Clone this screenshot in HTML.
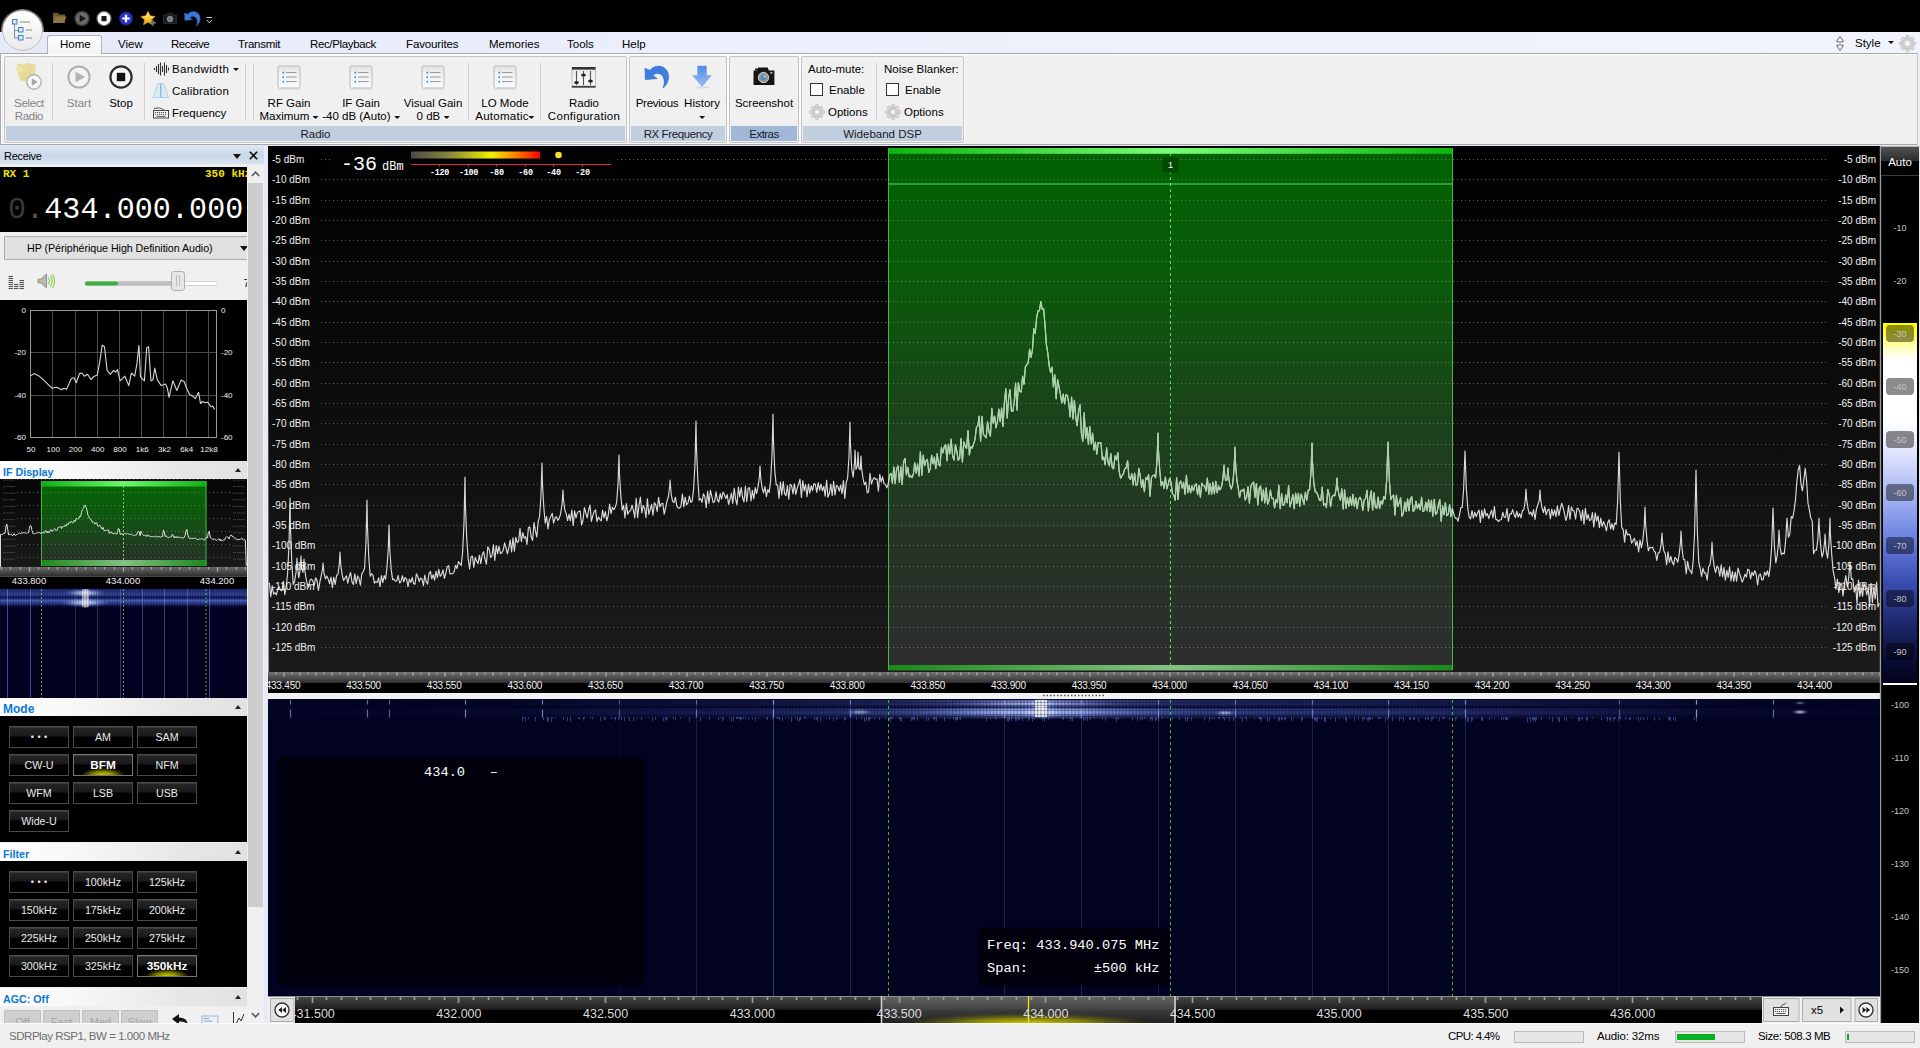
<!DOCTYPE html><html><head><meta charset="utf-8"><title>SDRuno</title><style>*{box-sizing:border-box;margin:0;padding:0}
html,body{width:1920px;height:1048px;overflow:hidden;background:#f0f0f0}
body{position:relative;font-family:"Liberation Sans",sans-serif;font-size:11.5px;color:#000}
.a{position:absolute}
.t{position:absolute;white-space:nowrap;line-height:14px}
.c{text-align:center}
.mono{font-family:"Liberation Mono","DejaVu Sans Mono",monospace}
svg{position:absolute;overflow:visible}
#title{left:0;top:0;width:1920px;height:32px;background:#000}
#tabs{left:0;top:32px;width:1920px;height:22px;background:linear-gradient(90deg,#e6e9f9 0,#eceffb 40%,#f1f4fc 100%)}
#ribbon{left:0;top:53px;width:1918px;height:92px;background:#f0f0f0;border:1px solid #a9a9a9;border-right-color:#c8c8c8;box-shadow:inset 1px 1px 0 #fff}
#under{left:0;top:145px;width:1920px;height:1px;background:#e4e8f6}
.tab{top:37px;font-size:11.5px}
.grp{top:56px;height:87px;border:1px solid #c3c3c3;border-radius:2px;background:#f0f0f0;box-shadow:0 0 0 1px #fafafa}
.grp .lab{left:1px;right:1px;bottom:1px;height:15px;background:#c1cedd;text-align:center;line-height:17px;font-size:11.5px;color:#1a1a2a}
.sep{width:1px;background:#cfcfcf;top:63px;height:57px}
.big{top:97px;text-align:center;line-height:13px;transform:translateX(-50%);white-space:nowrap}
.gray{color:#8b8285}
.sm{line-height:14px}
.hdr{left:0;width:247px;height:18px;background:linear-gradient(90deg,#ffffff,#f6f6f6 35%,#e6e6e6 75%,#e2e2e2);color:#0a78d7;font-weight:bold;font-size:12px;line-height:23px;padding-left:3px;overflow:hidden}
.hdr i{position:absolute;right:6px;top:7px;width:0;height:0;border-left:3.5px solid transparent;border-right:3.5px solid transparent;border-bottom:4px solid #222}
.btn{position:absolute;width:60px;height:22px;border:1px solid #4a4a4a;background:linear-gradient(#262626 0,#1a1a1a 45%,#000 50%,#000 100%);color:#e8e8e8;text-align:center;line-height:20px;font-size:10.7px;box-shadow:inset 0 1px 0 #3a3a3a}
.btn.on{color:#fff;font-weight:bold;font-size:11.8px;border-color:#777;background:radial-gradient(ellipse 22px 7px at 50% 100%,#c8c800 0,#8a8a00 45%,rgba(0,0,0,0) 100%),linear-gradient(#262626 0,#1a1a1a 45%,#000 50%,#000 100%)}
.dots{font-size:9px;letter-spacing:3.5px;line-height:21px;text-indent:3.5px}
.axl{position:absolute;color:#f0f0f0;font-size:11px;line-height:12px;white-space:nowrap}
.dd{display:inline-block;width:0;height:0;border-left:3px solid transparent;border-right:3px solid transparent;border-top:3.5px solid #111;vertical-align:1.5px}
.ddx{width:0;height:0;border-left:3px solid transparent;border-right:3px solid transparent;border-top:3.5px solid #111}
.dl{font-size:10px;letter-spacing:0}.fl{font-size:10px;letter-spacing:-.2px}
</style></head><body>
<div class="a" id="title"></div>
<div class="a" id="tabs"></div>
<div class="a" id="ribbon"></div>
<div class="a" id="under"></div>
<!-- app button -->
<div class="a" style="left:2px;top:10px;width:41px;height:41px;border-radius:50%;background:linear-gradient(#ffffff,#e9e9e9);border:1px solid #bdbdbd;box-shadow:0 0 0 1px rgba(255,255,255,.5)"></div>
<svg style="left:11px;top:18px" width="24" height="24" viewBox="0 0 24 24" fill="none">
<path d="M3.5 6v14h4M3.5 12.5h4" stroke="#7a8a9a" stroke-width="1"/>
<rect x="1.5" y="1.5" width="4.5" height="4.5" fill="#d9ecff" stroke="#3c7fc0"/>
<rect x="7.5" y="9.5" width="4.5" height="4.5" fill="#d9ecff" stroke="#3c7fc0"/>
<rect x="7.5" y="17.5" width="4.5" height="4.5" fill="#d9ecff" stroke="#3c7fc0"/>
<path d="M9 4h10M15 12h6M15 20h6" stroke="#888" stroke-width="1"/>
</svg>
<!-- quick access -->
<svg style="left:52px;top:10px" width="170" height="18" viewBox="52 10 170 18"><defs><linearGradient id="gst" x1="0" y1="0" x2="0" y2="1"><stop offset="0" stop-color="#fff2b8"/><stop offset=".45" stop-color="#fbd14a"/><stop offset="1" stop-color="#ee9a0c"/></linearGradient></defs>
<path d="M53 13h5l1.5 1.5H65V23H53z" fill="#6b5a2e"/><path d="M55 16.5h11.5L64 23H53z" fill="#8a7640"/>
<circle cx="82" cy="18.5" r="7" fill="#6c6c6c" stroke="#3c3c3c" stroke-width="1.6"/><path d="M79.6 14.8l6.4 3.7-6.4 3.7z" fill="#161616"/>
<circle cx="104" cy="18.5" r="7" fill="#fff" stroke="#777" stroke-width="1.2"/><rect x="101.4" y="16" width="5.2" height="5.2" rx=".8" fill="#1a1a1a"/>
<circle cx="126" cy="18.5" r="6.6" fill="#2a33c8" stroke="#1a1f7a" stroke-width="1"/><path d="M126 14.8v7.4M122.3 18.5h7.4" stroke="#fff" stroke-width="2.2"/>
<path d="M148 11.2l2.2 4.6 5 .6-3.7 3.4 1 5-4.5-2.5-4.5 2.5 1-5-3.7-3.4 5-.6z" fill="url(#gst)" stroke="#d89a10" stroke-width=".6"/><path d="M153 19.800v6M150 22.800h6" stroke="#777" stroke-width="1.500"/>
<path d="M163.5 15h3l1-1.800h5l1 1.800h3v8.500h-13z" fill="#1c1c1c" stroke="#3a3a3a" stroke-width=".6"/><circle cx="170" cy="19" r="2.8" fill="#6a7a86" stroke="#999" stroke-width=".8"/>
<g transform="translate(192.500 18) scale(.66) translate(-657 -76)"><path d="M644.900 68.200L645.300 79.800L657.200 78.600L653 75.300C656 72.800 660.500 73 662.600 76.200C664.800 79.600 664.600 84 663 88.200C668.800 83.500 670 76.500 667.300 71.300C664.200 65.500 656 63.800 649.800 70.200Z" fill="#3a78d6" stroke="#2256b0" stroke-width=".7"/></g>
<path d="M206.500 17.500h5.500" stroke="#ccc" stroke-width="1"/><path d="M206.800 20l2.500 2.800 2.500-2.800" stroke="#ccc" stroke-width="1" fill="none"/>
</svg>
<!-- tabs -->
<div class="a" style="left:47px;top:35px;width:55px;height:19px;background:linear-gradient(#fff,#f3f3f3);border:1px solid #aeb2bd;border-bottom:none;border-radius:3px 3px 0 0"></div>
<div class="t tab" style="left:60px">Home</div>
<div class="t tab" style="left:118px">View</div>
<div class="t tab" style="left:171px;letter-spacing:-.5px">Receive</div>
<div class="t tab" style="left:238px;letter-spacing:-.25px">Transmit</div>
<div class="t tab" style="left:310px;letter-spacing:-.36px">Rec/Playback</div>
<div class="t tab" style="left:406px;letter-spacing:-.13px">Favourites</div>
<div class="t tab" style="left:489px">Memories</div>
<div class="t tab" style="left:567px">Tools</div>
<div class="t tab" style="left:622px">Help</div>
<svg style="left:1834px;top:35px" width="12" height="17" viewBox="0 0 12 17" fill="none" stroke="#666" stroke-width="1"><path d="M2.500 6.500L6 1.500l3.500 5q-3.500 1.500-7 0z"/><path d="M2.500 10.500L6 15.500l3.500-5q-3.500-1.500-7 0z"/></svg>
<div class="t tab" style="left:1855px;top:36px">Style</div>
<div class="a" style="left:1888px;top:41px;border-left:3px solid transparent;border-right:3px solid transparent;border-top:3.500px solid #111"></div>
<svg style="left:1899px;top:35px" width="17" height="17" viewBox="-8.500 -8.500 17 17"><g fill="#d9d9d9" stroke="#bdbdbd" stroke-width=".8"><circle r="5.600"/><g id="gt"><rect x="-1.600" y="-8" width="3.200" height="3.400" rx=".6"/><rect x="-1.600" y="4.600" width="3.200" height="3.400" rx=".6"/></g><use href="#gt" transform="rotate(45)"/><use href="#gt" transform="rotate(90)"/><use href="#gt" transform="rotate(135)"/></g><circle r="3.200" fill="#f4f4f4" stroke="#c4c4c4" stroke-width=".8"/></svg>
<!-- groups -->
<div class="a grp" style="left:4px;width:623px"><div class="a lab">Radio</div></div>
<div class="a grp" style="left:629px;width:98px"><div class="a lab" style="letter-spacing:-.4px">RX Frequency</div></div>
<div class="a grp" style="left:729px;width:70px"><div class="a lab" style="background:#a0b8d8;letter-spacing:-.55px">Extras</div></div>
<div class="a grp" style="left:801px;width:163px"><div class="a lab">Wideband DSP</div></div>
<div class="a sep" style="left:52px"></div><div class="a sep" style="left:144px"></div><div class="a sep" style="left:245px"></div><div class="a sep" style="left:253px"></div><div class="a sep" style="left:468px"></div><div class="a sep" style="left:540px"></div><div class="a sep" style="left:876px"></div>
<!-- big buttons text -->
<div class="a big gray" style="left:29px;letter-spacing:-.35px">Select<br>Radio</div>
<div class="a big gray" style="left:79px">Start</div>
<div class="a big" style="left:121px">Stop</div>
<div class="a big" style="left:289px">RF Gain<br>Maximum <span class="dd"></span></div>
<div class="a big" style="left:361px">IF Gain<br>-40 dB (Auto) <span class="dd"></span></div>
<div class="a big" style="left:433px">Visual Gain<br>0 dB <span class="dd"></span></div>
<div class="a big" style="left:505px">LO Mode<br><span style="letter-spacing:.25px">Automatic</span><span class="dd"></span></div>
<div class="a big" style="left:584px">Radio<br><span style="letter-spacing:.3px">Configuration</span></div>
<div class="a big" style="left:657px;letter-spacing:-.25px">Previous</div>
<div class="a big" style="left:702px">History<br><span class="dd"></span></div>
<div class="a big" style="left:764px">Screenshot</div>
<!-- small buttons -->
<div class="t sm" style="left:172px;top:62px;letter-spacing:.4px">Bandwidth</div><div class="a ddx" style="left:233px;top:68px"></div>
<div class="t sm" style="left:172px;top:84px;letter-spacing:.18px">Calibration</div>
<div class="t sm" style="left:172px;top:106px">Frequency</div>
<div class="t sm" style="left:808px;top:62px">Auto-mute:</div>
<div class="t sm" style="left:829px;top:83px">Enable</div>
<div class="t sm" style="left:828px;top:105px">Options</div>
<div class="t sm" style="left:884px;top:62px">Noise Blanker:</div>
<div class="t sm" style="left:905px;top:83px">Enable</div>
<div class="t sm" style="left:904px;top:105px">Options</div>
<div class="a" style="left:810px;top:83px;width:13px;height:13px;background:#fff;border:1px solid #333"></div>
<div class="a" style="left:886px;top:83px;width:13px;height:13px;background:#fff;border:1px solid #333"></div>
<!-- ribbon icons -->
<svg style="left:0;top:0" width="980" height="145" viewBox="0 0 980 145">
<defs>
<linearGradient id="gl" x1="0" y1="0" x2="0" y2="1"><stop offset="0" stop-color="#e2e2e2"/><stop offset=".35" stop-color="#f1f1f1"/><stop offset="1" stop-color="#fafafa"/></linearGradient>
<linearGradient id="gb" x1="0" y1="0" x2="0" y2="1"><stop offset="0" stop-color="#4d8be8"/><stop offset="1" stop-color="#9bbcf0"/></linearGradient>
<linearGradient id="gf" x1="0" y1="0" x2="1" y2="1"><stop offset="0" stop-color="#f2e8b0"/><stop offset="1" stop-color="#dccb78"/></linearGradient>
<g id="lst"><rect x=".5" y=".5" width="22" height="22" rx="1.5" fill="url(#gl)" stroke="#b9b9b9"/><path d="M8.500 7h10.500M8.500 11.500h10.500M8.500 16h10.500" stroke="#9a9a9a" stroke-width="1"/><path d="M5 6.300h1.600v1.600H5zM5 10.800h1.600v1.600H5zM5 15.300h1.600v1.600H5z" fill="#2f8be6"/><path d="M1 23.500h21" stroke="#d0d0d0"/></g>
<g id="gear"><g fill="#dcdcdc" stroke="#b8b8b8" stroke-width=".8"><circle r="5"/><g id="g2"><rect x="-1.500" y="-7.300" width="3" height="3.200" rx=".6"/><rect x="-1.500" y="4.100" width="3" height="3.200" rx=".6"/></g><use href="#g2" transform="rotate(45)"/><use href="#g2" transform="rotate(90)"/><use href="#g2" transform="rotate(135)"/></g><circle r="2.800" fill="#f0f0f0" stroke="#c0c0c0" stroke-width=".8"/></g>
</defs>
<!-- select radio -->
<path d="M16.500 63.500l8.500 1 1.500-1.500 9 1.200v14l-14 .5z" fill="#e9dc98"/>
<path d="M15.500 67l16 1.200 4.500 13.500-15.500-1z" fill="url(#gf)" stroke="#e8dfae" stroke-width=".5"/>
<circle cx="34" cy="82" r="7.200" fill="#f8f8f8" stroke="#b4b4b4" stroke-width="1.400"/><path d="M31.800 78.300l6 3.700-6 3.700z" fill="#a8a8a8"/>
<!-- start -->
<circle cx="79" cy="77" r="10.600" fill="#f4f4f4" stroke="#b0b0b0" stroke-width="2"/><path d="M75.500 71.500l9.500 5.500-9.500 5.500z" fill="#b4b4b4"/>
<!-- stop -->
<circle cx="121" cy="77" r="10.600" fill="#f6f6f6" stroke="#2c2c2c" stroke-width="2.200"/><rect x="116.800" y="72.800" width="8.400" height="8.400" fill="#111"/>
<!-- bandwidth -->
<path d="M154.500 68v2M156.500 66v6M158.500 64v10M160.500 62.500v13M162.500 66v6M164.500 62.500v13M166.500 65v8M168.500 67.500v3" stroke="#333" stroke-width="1.100"/>
<!-- calibration -->
<path d="M158 83.500h5.500l5 14h-15.500z" fill="#d8ecf8" stroke="#a9c6da" stroke-width=".8"/><path d="M160.800 83.500v14" stroke="#8eb0c8" stroke-width="1.200"/>
<!-- frequency keyboard -->
<path d="M154 108.500q6-1.500 9 .8l2 1.700" stroke="#555" fill="none" stroke-width="1"/>
<rect x="153.500" y="110.500" width="15" height="7.500" fill="#f4f4f4" stroke="#444" stroke-width="1"/><path d="M155 112.500h12M155 114.300h12" stroke="#555" stroke-width="1" stroke-dasharray="1.200 .8"/><path d="M156.500 116.300h9" stroke="#555" stroke-width="1"/>
<!-- list icons -->
<use href="#lst" x="277.500" y="65.500"/><use href="#lst" x="349.500" y="65.500"/><use href="#lst" x="421.500" y="65.500"/><use href="#lst" x="493.500" y="65.500"/>
<!-- mixer -->
<rect x="572" y="67.500" width="23.500" height="20" fill="url(#gl)" stroke="#9a9a9a" stroke-width=".6"/>
<rect x="572" y="67" width="23.500" height="2.600" fill="#333"/><rect x="572" y="85.800" width="23.500" height="1.800" fill="#444"/>
<path d="M576.500 71v14M583.500 71v14M590.500 71v14" stroke="#555" stroke-width="1.100"/>
<ellipse cx="576.500" cy="82.500" rx="2.400" ry="1.500" fill="#222"/><ellipse cx="583.500" cy="75" rx="2.400" ry="1.500" fill="#222"/><ellipse cx="590.500" cy="81" rx="2.400" ry="1.500" fill="#222"/>
<!-- previous -->
<path id="prv" d="M644.900 68.200L645.300 79.800L657.200 78.600L653 75.300C656 72.800 660.500 73 662.600 76.200C664.800 79.600 664.600 84 663 88.200C668.800 83.500 670 76.500 667.300 71.300C664.200 65.500 656 63.800 649.800 70.200Z" fill="#3f7de0" stroke="#2e62c4" stroke-width=".5"/>
<!-- history -->
<path d="M697.500 66h9v9.500h4.800L702 86.500 692.700 75.500h4.800z" fill="url(#gb)" stroke="#7da3e0" stroke-width=".5"/>
<ellipse cx="702" cy="87.500" rx="8" ry="1.200" fill="#d4d4d4" opacity=".7"/>
<!-- camera -->
<path d="M753.500 70.500h3.500l1.200-3h9.500l1.200 3h5.500v14.500h-20.900z" fill="#151515"/><rect x="755" y="68.500" width="3" height="2" fill="#222"/>
<circle cx="763.500" cy="77.500" r="5.200" fill="#8b97a1" stroke="#cfcfcf" stroke-width="1"/><circle cx="763.500" cy="77.500" r="2.600" fill="#5e86ad"/><circle cx="764.600" cy="76.400" r="1" fill="#cfe3f5"/><rect x="770.500" y="72" width="1.800" height="1.600" fill="#ddd"/>
<!-- gears -->
<use href="#gear" x="817" y="112"/><use href="#gear" x="893" y="112"/>
</svg>



<div class="a" style="left:0;top:146px;width:264px;height:878px;background:#f0f0f0"></div>
<div class="a" style="left:264px;top:146px;width:4px;height:878px;background:#e6e9f8"></div>
<div class="a" style="left:0;top:146px;width:264px;height:19px;background:linear-gradient(#dde7f2,#c9d7e8 55%,#d9e4f1);border-bottom:1px solid #e8eef6"></div>
<div class="t" style="left:4px;top:149px;font-size:11px;letter-spacing:-.3px">Receive</div>
<div class="a" style="left:233px;top:154px;border-left:4.5px solid transparent;border-right:4.5px solid transparent;border-top:5px solid #111"></div>
<svg style="left:249px;top:151px" width="9" height="9" viewBox="0 0 9 9"><path d="M.8.800l7.400 7.400M8.200.800L.800 8.200" stroke="#111" stroke-width="1.600"/></svg>
<div class="a" style="left:0;top:167px;width:247px;height:65px;background:#000;overflow:hidden"><div class="t mono" style="left:3px;top:1px;color:#f0e000;font-weight:bold;font-size:11px;line-height:13px">RX 1</div><div class="t mono" style="left:205px;top:1px;color:#f0e000;font-weight:bold;font-size:11px;line-height:13px">350 kHz</div><div class="t mono" style="left:8px;top:24.500px;font-size:30px;line-height:36px;color:#fff;letter-spacing:.1px"><span style="color:#3a3a3a">0</span><span style="color:#555">.</span>434.000.000</div></div>
<div class="a" style="left:4px;top:236px;width:250px;height:24px;background:#e1e1e1;border:1px solid #adadad"></div>
<div class="t" style="left:27px;top:241px;font-size:10.700px;letter-spacing:-.05px">HP (Périphérique High Definition Audio)</div>
<div class="a" style="left:240px;top:246px;border-left:4.5px solid transparent;border-right:4.5px solid transparent;border-top:5px solid #111"></div>
<svg style="left:0;top:262px" width="247" height="38" viewBox="0 262 247 38"><g stroke="#555" stroke-width="1.100" stroke-dasharray="none"><path d="M8.500 288.5h4.500"/><path d="M8.500 286.5h4.500"/><path d="M8.500 284.5h4.500"/><path d="M8.500 282.5h4.500"/><path d="M8.500 280.5h4.500"/><path d="M8.500 278.5h4.500"/><path d="M8.500 276.5h4.500"/><path d="M14 288.5h4.500"/><path d="M14 286.5h4.500"/><path d="M14 284.5h4.500"/><path d="M19.500 288.5h4.500"/><path d="M19.500 286.5h4.500"/><path d="M19.500 284.5h4.500"/><path d="M19.500 282.5h4.500"/><path d="M19.500 280.5h4.500"/></g><path d="M38 279h3l5.500-5v14l-5.500-5h-3z" fill="#b8b8b8" stroke="#777" stroke-width=".7"/><path d="M38 279h1.500v4H38z" fill="#e0a020"/><path d="M48.500 277.500q2 3.500 0 7M50.500 275.500q3.200 5.500 0 11M52.500 274q4 7 0 14" stroke="#7acb2a" stroke-width="1" fill="none"/><rect x="85" y="281.500" width="133" height="4" rx="2" fill="#fff" stroke="#c8c8c8" stroke-width=".8"/><rect x="85" y="281.500" width="90" height="4" rx="2" fill="#bdbdbd"/><rect x="85" y="281.500" width="33" height="4" rx="2" fill="#3cb043"/><rect x="171.500" y="271.500" width="13" height="19" rx="2.500" fill="#e6e6e6" stroke="#b0b0b0"/><path d="M176.500 275v11M179.500 275v11" stroke="#bcbcbc" stroke-width="1"/></svg>
<div class="t" style="left:243.500px;top:276px;font-size:11px">7</div>
<div class="a" style="left:0;top:300px;width:247px;height:161px;background:#000"></div>
<svg style="left:0;top:300px" width="247" height="161" viewBox="0 300 247 161"><g stroke="#4a4a4a" stroke-width="1"><path d="M30.5 310v127"/><path d="M52.5 310v127"/><path d="M75.5 310v127"/><path d="M97.5 310v127"/><path d="M119.5 310v127"/><path d="M141.5 310v127"/><path d="M163.5 310v127"/><path d="M186.5 310v127"/><path d="M208.5 310v127"/><path d="M30 310.5h186"/><path d="M30 352.5h186"/><path d="M30 395.5h186"/><path d="M30 437.5h186"/><path d="M216.500 310v127"/></g><rect x="30.500" y="310.500" width="186" height="127" fill="none" stroke="#9a9a9a"/><polyline points="30.8,375.9 34.1,373.6 38.9,375.9 43.8,380.1 51.9,388.2 56.8,387.2 61.6,389.8 63.9,388.2 66.5,389.2 71.4,378.5 74.0,377.8 76.2,382.7 79.5,373.6 81.8,373.0 84.4,376.2 87.6,374.3 90.9,379.5 94.1,376.2 97.3,375.2 99.9,360.6 102.2,345.1 104.5,346.7 107.1,370.4 110.3,374.3 113.6,370.4 115.8,372.0 117.5,369.7 120.1,380.8 124.9,376.2 128.8,385.6 131.4,373.0 134.7,376.2 136.9,363.9 138.9,345.4 140.5,376.9 144.4,380.8 146.7,347.7 148.6,346.7 150.9,380.8 152.8,380.1 154.8,368.1 157.4,380.1 161.3,385.6 165.5,384.0 167.4,388.2 169.0,397.3 172.9,380.8 176.8,390.5 181.1,380.1 184.3,381.7 186.6,388.2 189.8,394.7 193.1,396.3 195.3,398.6 198.6,392.4 200.5,403.5 202.5,401.5 205.1,402.8 207.7,402.2 210.9,406.7 212.8,406.1 214.5,409.6" fill="none" stroke="#d8d8d8" stroke-width="1.100" stroke-linejoin="round"/></svg>
<div class="axl" style="left:0;width:26px;text-align:right;top:305px;font-size:8px">0</div>
<div class="axl" style="left:221px;top:305px;font-size:8px">0</div>
<div class="axl" style="left:0;width:26px;text-align:right;top:347px;font-size:8px">-20</div>
<div class="axl" style="left:221px;top:347px;font-size:8px">-20</div>
<div class="axl" style="left:0;width:26px;text-align:right;top:390px;font-size:8px">-40</div>
<div class="axl" style="left:221px;top:390px;font-size:8px">-40</div>
<div class="axl" style="left:0;width:26px;text-align:right;top:432px;font-size:8px">-60</div>
<div class="axl" style="left:221px;top:432px;font-size:8px">-60</div>
<div class="axl c" style="left:16.0px;width:30px;top:444px;font-size:8px">50</div>
<div class="axl c" style="left:38.2px;width:30px;top:444px;font-size:8px">100</div>
<div class="axl c" style="left:60.5px;width:30px;top:444px;font-size:8px">200</div>
<div class="axl c" style="left:82.8px;width:30px;top:444px;font-size:8px">400</div>
<div class="axl c" style="left:105.0px;width:30px;top:444px;font-size:8px">800</div>
<div class="axl c" style="left:127.2px;width:30px;top:444px;font-size:8px">1k6</div>
<div class="axl c" style="left:149.5px;width:30px;top:444px;font-size:8px">3k2</div>
<div class="axl c" style="left:171.8px;width:30px;top:444px;font-size:8px">6k4</div>
<div class="axl c" style="left:194.0px;width:30px;top:444px;font-size:8px">12k8</div>
<div class="a hdr" style="top:461px;font-size:10.700px">IF Display<i></i></div>
<div class="a" style="left:0;top:479px;width:247px;height:88px;background:linear-gradient(#050505,#1a1a1a)"></div>
<svg style="left:0;top:479px" width="247" height="219" viewBox="0 479 247 219"><defs><linearGradient id="ifg" x1="0" y1="0" x2="0" y2="1"><stop offset="0" stop-color="#066806"/><stop offset=".35" stop-color="#0d5a0d"/><stop offset="1" stop-color="#2b2b2b"/></linearGradient><linearGradient id="ift" x1="0" y1="0" x2="1" y2="0"><stop offset="0" stop-color="#10b010"/><stop offset=".5" stop-color="#6cf86c"/><stop offset="1" stop-color="#10b010"/></linearGradient><linearGradient id="ifb" x1="0" y1="0" x2="1" y2="0"><stop offset="0" stop-color="#1a8a1a"/><stop offset=".5" stop-color="#84c084"/><stop offset="1" stop-color="#1a8a1a"/></linearGradient><linearGradient id="axg" x1="0" y1="0" x2="0" y2="1"><stop offset="0" stop-color="#6a6a6a"/><stop offset="1" stop-color="#2a2a2a"/></linearGradient></defs><path d="M17 479.5h214" stroke="#5a5a5a" stroke-width="1" stroke-dasharray="1 3"/><path d="M17 492.5h214" stroke="#5a5a5a" stroke-width="1" stroke-dasharray="1 3"/><path d="M17 505.5h214" stroke="#5a5a5a" stroke-width="1" stroke-dasharray="1 3"/><path d="M17 518.5h214" stroke="#5a5a5a" stroke-width="1" stroke-dasharray="1 3"/><path d="M17 531.5h214" stroke="#5a5a5a" stroke-width="1" stroke-dasharray="1 3"/><path d="M17 544.5h214" stroke="#5a5a5a" stroke-width="1" stroke-dasharray="1 3"/><path d="M17 557.5h214" stroke="#5a5a5a" stroke-width="1" stroke-dasharray="1 3"/><path d="M3 480.0h3M7 480.0h8M233 480.0h3M237 480.0h8" stroke="#666" stroke-width="1" stroke-dasharray="1.500 .7" opacity=".7"/><path d="M3 486.6h3M7 486.6h8M233 486.6h3M237 486.6h8" stroke="#666" stroke-width="1" stroke-dasharray="1.500 .7" opacity=".7"/><path d="M3 493.2h3M7 493.2h8M233 493.2h3M237 493.2h8" stroke="#666" stroke-width="1" stroke-dasharray="1.500 .7" opacity=".7"/><path d="M3 499.8h3M7 499.8h8M233 499.8h3M237 499.8h8" stroke="#666" stroke-width="1" stroke-dasharray="1.500 .7" opacity=".7"/><path d="M3 506.4h3M7 506.4h8M233 506.4h3M237 506.4h8" stroke="#666" stroke-width="1" stroke-dasharray="1.500 .7" opacity=".7"/><path d="M3 513.0h3M7 513.0h8M233 513.0h3M237 513.0h8" stroke="#666" stroke-width="1" stroke-dasharray="1.500 .7" opacity=".7"/><path d="M3 519.6h3M7 519.6h8M233 519.6h3M237 519.6h8" stroke="#666" stroke-width="1" stroke-dasharray="1.500 .7" opacity=".7"/><path d="M3 526.2h3M7 526.2h8M233 526.2h3M237 526.2h8" stroke="#666" stroke-width="1" stroke-dasharray="1.500 .7" opacity=".7"/><path d="M3 532.8h3M7 532.8h8M233 532.8h3M237 532.8h8" stroke="#666" stroke-width="1" stroke-dasharray="1.500 .7" opacity=".7"/><path d="M3 539.4h3M7 539.4h8M233 539.4h3M237 539.4h8" stroke="#666" stroke-width="1" stroke-dasharray="1.500 .7" opacity=".7"/><path d="M3 546.0h3M7 546.0h8M233 546.0h3M237 546.0h8" stroke="#666" stroke-width="1" stroke-dasharray="1.500 .7" opacity=".7"/><path d="M3 552.6h3M7 552.6h8M233 552.6h3M237 552.6h8" stroke="#666" stroke-width="1" stroke-dasharray="1.500 .7" opacity=".7"/><path d="M3 559.2h3M7 559.2h8M233 559.2h3M237 559.2h8" stroke="#666" stroke-width="1" stroke-dasharray="1.500 .7" opacity=".7"/><rect x="41" y="481" width="165.500" height="85" fill="url(#ifg)"/><path d="M43 492.5h162" stroke="#5f8a5f" stroke-width="1" stroke-dasharray="1 3" opacity=".7"/><path d="M43 505.5h162" stroke="#5f8a5f" stroke-width="1" stroke-dasharray="1 3" opacity=".7"/><path d="M43 518.5h162" stroke="#5f8a5f" stroke-width="1" stroke-dasharray="1 3" opacity=".7"/><path d="M43 531.5h162" stroke="#5f8a5f" stroke-width="1" stroke-dasharray="1 3" opacity=".7"/><path d="M43 544.5h162" stroke="#5f8a5f" stroke-width="1" stroke-dasharray="1 3" opacity=".7"/><path d="M43 557.5h162" stroke="#5f8a5f" stroke-width="1" stroke-dasharray="1 3" opacity=".7"/><rect x="41" y="481" width="165.500" height="5.500" fill="url(#ift)"/><rect x="41" y="560" width="165.500" height="6" fill="url(#ifb)"/><path d="M41.500 481v85M206 481v85" stroke="#3fb53f" stroke-width="1"/><path d="M123.500 486v74" stroke="#5fdf5f" stroke-width="1" stroke-dasharray="2 2"/><polyline points="0.5,567.0 0.5,534.2 1.4,534.3 2.3,534.8 3.2,533.7 4.1,533.5 5.0,533.2 5.9,527.1 6.8,524.1 7.7,529.3 8.6,535.1 9.5,534.0 10.4,534.6 11.3,534.3 12.2,535.6 13.1,535.2 14.0,533.7 14.9,535.4 15.8,535.3 16.7,534.6 17.6,534.4 18.5,533.4 19.4,533.0 20.3,533.9 21.2,532.9 22.1,533.0 23.0,533.0 23.9,532.4 24.8,533.1 25.7,532.9 26.6,533.5 27.5,532.7 28.4,532.8 29.3,528.6 30.2,525.5 31.1,526.1 32.0,530.6 32.9,533.6 33.8,533.8 34.7,533.6 35.6,533.5 36.5,532.9 37.4,532.9 38.3,532.8 39.2,532.2 40.1,533.4 41.0,532.5 41.9,533.3 42.8,532.2 43.7,533.2 44.6,532.9 45.5,530.4 46.4,530.9 47.3,533.0 48.2,531.4 49.1,532.9 50.0,530.8 50.9,529.5 51.8,531.1 52.7,531.3 53.6,529.5 54.5,528.7 55.4,529.2 56.3,530.9 57.2,529.9 58.1,527.5 59.0,527.6 59.9,526.8 60.8,526.4 61.7,528.5 62.6,526.2 63.5,527.1 64.4,526.2 65.3,524.9 66.2,526.2 67.1,523.8 68.0,524.8 68.9,522.5 69.8,522.9 70.7,521.6 71.6,521.4 72.5,523.2 73.4,522.3 74.3,520.2 75.2,521.5 76.1,518.6 77.0,518.5 77.9,519.4 78.8,518.2 79.7,515.9 80.6,516.9 81.5,512.2 82.4,509.7 83.3,508.5 84.2,505.7 85.1,505.0 86.0,507.0 86.9,509.8 87.8,514.8 88.7,516.2 89.6,518.6 90.5,519.0 91.4,520.1 92.3,522.4 93.2,521.6 94.1,522.6 95.0,524.2 95.9,522.6 96.8,523.1 97.7,526.1 98.6,526.4 99.5,525.2 100.4,525.6 101.3,528.0 102.2,529.2 103.1,527.4 104.0,530.4 104.9,530.8 105.8,530.5 106.7,530.4 107.6,529.8 108.5,530.1 109.4,533.5 110.3,531.8 111.2,533.0 112.1,532.4 113.0,533.9 113.9,533.6 114.8,533.1 115.7,533.0 116.6,534.3 117.5,532.4 118.4,528.3 119.3,529.2 120.2,534.4 121.1,534.1 122.0,533.5 122.9,534.9 123.8,533.6 124.7,533.3 125.6,533.8 126.5,534.2 127.4,533.5 128.3,533.8 129.2,534.2 130.1,534.7 131.0,533.8 131.9,534.4 132.8,535.5 133.7,535.7 134.6,535.1 135.5,535.3 136.4,535.1 137.3,532.9 138.2,531.3 139.1,531.7 140.0,535.8 140.9,531.2 141.8,533.2 142.7,534.2 143.6,535.5 144.5,535.3 145.4,535.9 146.3,535.1 147.2,536.6 148.1,534.8 149.0,535.8 149.9,536.3 150.8,536.7 151.7,536.4 152.6,536.5 153.5,536.7 154.4,537.0 155.3,535.9 156.2,536.6 157.1,537.1 158.0,537.0 158.9,536.2 159.8,536.9 160.7,537.1 161.6,536.5 162.5,536.7 163.4,529.9 164.3,531.5 165.2,536.7 166.1,535.7 167.0,536.9 167.9,537.6 168.8,537.5 169.7,537.3 170.6,536.7 171.5,536.7 172.4,534.2 173.3,536.0 174.2,537.9 175.1,536.4 176.0,537.8 176.9,536.4 177.8,537.6 178.7,537.4 179.6,536.9 180.5,537.9 181.4,537.5 182.3,537.8 183.2,538.4 184.1,537.1 185.0,535.9 185.9,531.2 186.8,529.2 187.7,534.4 188.6,537.1 189.5,538.7 190.4,538.3 191.3,538.0 192.2,539.0 193.1,538.0 194.0,538.8 194.9,537.9 195.8,538.5 196.7,539.3 197.6,539.6 198.5,539.7 199.4,538.7 200.3,539.2 201.2,538.8 202.1,538.5 203.0,539.3 203.9,540.0 204.8,539.9 205.7,537.7 206.6,537.1 207.5,538.1 208.4,531.9 209.3,531.3 210.2,537.0 211.1,538.4 212.0,538.9 212.9,539.4 213.8,539.2 214.7,538.9 215.6,540.1 216.5,540.5 217.4,539.6 218.3,539.0 219.2,539.0 220.1,540.9 221.0,539.3 221.9,540.8 222.8,540.7 223.7,539.9 224.6,540.0 225.5,537.5 226.4,536.8 227.3,537.1 228.2,537.3 229.1,539.1 230.0,536.4 230.9,535.0 231.8,535.3 232.7,536.9 233.6,537.0 234.5,537.8 235.4,538.3 236.3,539.0 237.2,539.8 238.1,539.6 239.0,539.1 239.9,539.7 240.8,538.7 241.7,538.0 242.6,539.2 243.5,540.1 244.4,539.4 245.3,540.0 246.3,566.0" fill="none" stroke="#dcdcdc" stroke-width="1" stroke-linejoin="round"/><rect x="0" y="567" width="247" height="9.500" fill="url(#axg)"/><rect x="0" y="576.500" width="247" height="11.500" fill="#000"/><path d="M1.5 567v2.5" stroke="#a8a8a8" stroke-width="1.300"/><path d="M10.5 567v2.5" stroke="#a8a8a8" stroke-width="1.300"/><path d="M20.5 567v2.5" stroke="#a8a8a8" stroke-width="1.300"/><path d="M29.5 567v4.5" stroke="#a8a8a8" stroke-width="1.300"/><path d="M38.5 567v2.5" stroke="#a8a8a8" stroke-width="1.300"/><path d="M48.5 567v2.5" stroke="#a8a8a8" stroke-width="1.300"/><path d="M57.5 567v2.5" stroke="#a8a8a8" stroke-width="1.300"/><path d="M67.5 567v2.5" stroke="#a8a8a8" stroke-width="1.300"/><path d="M76.5 567v3.5" stroke="#a8a8a8" stroke-width="1.300"/><path d="M85.5 567v2.5" stroke="#a8a8a8" stroke-width="1.300"/><path d="M95.5 567v2.5" stroke="#a8a8a8" stroke-width="1.300"/><path d="M104.5 567v2.5" stroke="#a8a8a8" stroke-width="1.300"/><path d="M114.5 567v2.5" stroke="#a8a8a8" stroke-width="1.300"/><path d="M123.5 567v4.5" stroke="#a8a8a8" stroke-width="1.300"/><path d="M132.5 567v2.5" stroke="#a8a8a8" stroke-width="1.300"/><path d="M142.5 567v2.5" stroke="#a8a8a8" stroke-width="1.300"/><path d="M151.5 567v2.5" stroke="#a8a8a8" stroke-width="1.300"/><path d="M161.5 567v2.5" stroke="#a8a8a8" stroke-width="1.300"/><path d="M170.5 567v3.5" stroke="#a8a8a8" stroke-width="1.300"/><path d="M179.5 567v2.5" stroke="#a8a8a8" stroke-width="1.300"/><path d="M189.5 567v2.5" stroke="#a8a8a8" stroke-width="1.300"/><path d="M198.5 567v2.5" stroke="#a8a8a8" stroke-width="1.300"/><path d="M208.5 567v2.5" stroke="#a8a8a8" stroke-width="1.300"/><path d="M217.5 567v4.5" stroke="#a8a8a8" stroke-width="1.300"/><path d="M226.5 567v2.5" stroke="#a8a8a8" stroke-width="1.300"/><path d="M236.5 567v2.5" stroke="#a8a8a8" stroke-width="1.300"/><path d="M245.5 567v2.5" stroke="#a8a8a8" stroke-width="1.300"/><rect x="0" y="588" width="247" height="110" fill="#020220"/><defs><linearGradient id="wfb" x1="0" y1="0" x2="0" y2="1"><stop offset="0" stop-color="#2a3a8a" stop-opacity=".7"/><stop offset=".3" stop-color="#3a4ea8" stop-opacity=".9"/><stop offset=".45" stop-color="#1c2870" stop-opacity=".6"/><stop offset=".6" stop-color="#5068c8" stop-opacity=".95"/><stop offset=".8" stop-color="#3044a0" stop-opacity=".7"/><stop offset="1" stop-color="#020220" stop-opacity="0"/></linearGradient><pattern id="rip2" width="2.600" height="19" patternUnits="userSpaceOnUse"><rect x="0" y="0" width="1" height="19" fill="#020220" opacity=".3"/></pattern><radialGradient id="wfh"><stop offset="0" stop-color="#fff"/><stop offset=".35" stop-color="#c8d8ff" stop-opacity=".9"/><stop offset="1" stop-color="#5068c8" stop-opacity="0"/></radialGradient></defs><rect x="0" y="589" width="247" height="19" fill="url(#wfb)"/><ellipse cx="85" cy="593" rx="22" ry="4.500" fill="url(#wfh)" opacity=".8"/><ellipse cx="85" cy="602.500" rx="26" ry="5" fill="url(#wfh)" opacity=".85"/><rect x="82" y="589" width="7" height="18.500" rx="2" fill="#fff" opacity=".6"/><rect x="0" y="589" width="247" height="19" fill="url(#rip2)"/><path d="M7.5 589v109" stroke="#6f86e8" stroke-width="1" opacity="0.55"/><path d="M30.5 589v109" stroke="#6f86e8" stroke-width="1" opacity="0.50"/><path d="M75.5 589v109" stroke="#6f86e8" stroke-width="1" opacity="0.30"/><path d="M97.5 589v109" stroke="#6f86e8" stroke-width="1" opacity="0.35"/><path d="M120.5 589v109" stroke="#6f86e8" stroke-width="1" opacity="0.40"/><path d="M142.5 589v109" stroke="#6f86e8" stroke-width="1" opacity="0.45"/><path d="M164.5 589v109" stroke="#6f86e8" stroke-width="1" opacity="0.45"/><path d="M187.5 589v109" stroke="#6f86e8" stroke-width="1" opacity="0.40"/><path d="M209.5 589v109" stroke="#6f86e8" stroke-width="1" opacity="0.50"/><path d="M41.5 589v109" stroke="#4fcf4f" stroke-width="1" stroke-dasharray="2 2" opacity=".85"/><path d="M123.5 589v109" stroke="#4fcf4f" stroke-width="1" stroke-dasharray="2 2" opacity=".85"/><path d="M206.0 589v109" stroke="#4fcf4f" stroke-width="1" stroke-dasharray="2 2" opacity=".85"/></svg>
<div class="axl c" style="left:4px;width:50px;top:574.500px;font-size:9.500px">433.800</div>
<div class="axl c" style="left:98px;width:50px;top:574.500px;font-size:9.500px">434.000</div>
<div class="axl c" style="left:192px;width:50px;top:574.500px;font-size:9.500px">434.200</div>
<div class="a hdr" style="top:698px">Mode<i></i></div>
<div class="a" style="left:0;top:716px;width:247px;height:126px;background:#000"></div>
<div class="btn dots" style="left:9px;top:726px">•••</div>
<div class="btn" style="left:73px;top:726px">AM</div>
<div class="btn" style="left:137px;top:726px">SAM</div>
<div class="btn" style="left:9px;top:754px">CW-U</div>
<div class="btn on" style="left:73px;top:754px">BFM</div>
<div class="btn" style="left:137px;top:754px">NFM</div>
<div class="btn" style="left:9px;top:782px">WFM</div>
<div class="btn" style="left:73px;top:782px">LSB</div>
<div class="btn" style="left:137px;top:782px">USB</div>
<div class="btn" style="left:9px;top:810px">Wide-U</div>
<div class="a hdr" style="top:843px;font-size:10.700px">Filter<i></i></div>
<div class="a" style="left:0;top:861px;width:247px;height:126px;background:#000"></div>
<div class="btn dots" style="left:9px;top:871px">•••</div>
<div class="btn" style="left:73px;top:871px">100kHz</div>
<div class="btn" style="left:137px;top:871px">125kHz</div>
<div class="btn" style="left:9px;top:899px">150kHz</div>
<div class="btn" style="left:73px;top:899px">175kHz</div>
<div class="btn" style="left:137px;top:899px">200kHz</div>
<div class="btn" style="left:9px;top:927px">225kHz</div>
<div class="btn" style="left:73px;top:927px">250kHz</div>
<div class="btn" style="left:137px;top:927px">275kHz</div>
<div class="btn" style="left:9px;top:955px">300kHz</div>
<div class="btn" style="left:73px;top:955px">325kHz</div>
<div class="btn on" style="left:137px;top:955px">350kHz</div>
<div class="a hdr" style="top:988px;font-size:10.700px">AGC: Off<i></i></div>
<div class="a" style="left:0;top:1006px;width:247px;height:18.500px;background:#f0f0f0;overflow:hidden"><div class="a" style="left:4px;top:4px;width:37px;height:22px;background:#cfcfcf;border:1px solid #c0c0c0;color:#a4a4a4;text-align:center;font-size:11px;line-height:22px">Off</div><div class="a" style="left:43px;top:4px;width:37px;height:22px;background:#cfcfcf;border:1px solid #c0c0c0;color:#a4a4a4;text-align:center;font-size:11px;line-height:22px">Fast</div><div class="a" style="left:82px;top:4px;width:37px;height:22px;background:#cfcfcf;border:1px solid #c0c0c0;color:#a4a4a4;text-align:center;font-size:11px;line-height:22px">Med</div><div class="a" style="left:121px;top:4px;width:37px;height:22px;background:#cfcfcf;border:1px solid #c0c0c0;color:#a4a4a4;text-align:center;font-size:11px;line-height:22px">Slow</div><svg style="left:170px;top:4px" width="80" height="16" viewBox="170 1010 80 16"><path d="M172 1019l7-5v3.500q8 0 9 7-3-3.500-9-3v3z" fill="#111"/><rect x="202" y="1016" width="16" height="10" fill="#e8f0f8" stroke="#9ab8d8"/><path d="M204 1018.500h5M204 1021h8" stroke="#8ab" /><path d="M233.500 1012v14" stroke="#333" stroke-width="1"/><path d="M236 1024l3-6 2 3 3-7" stroke="#333" fill="none" stroke-width="1"/></svg></div>
<div class="a" style="left:247px;top:165px;width:17px;height:859px;background:#f0f0f0"></div>
<div class="a" style="left:248px;top:183px;width:15px;height:724px;background:#cdcdcd"></div>
<svg style="left:251px;top:171px" width="9" height="6" viewBox="0 0 9 6"><path d="M.800 5l3.700-3.800L8.200 5" stroke="#555" stroke-width="1.600" fill="none"/></svg>
<svg style="left:251px;top:1012px" width="9" height="6" viewBox="0 0 9 6"><path d="M.800 1l3.700 3.800L8.200 1" stroke="#555" stroke-width="1.600" fill="none"/></svg>
<div class="a" style="left:268px;top:146px;width:1652px;height:878px;background:#000"></div>
<div class="a" style="left:268px;top:146px;width:1612px;height:526px;background:linear-gradient(#000,#0a0a0a 40%,#1b1b1b)"></div>
<svg style="left:268px;top:146px" width="1613" height="553" viewBox="268 146 1613 553"><defs>
<linearGradient id="gfill" x1="0" y1="0" x2="0" y2="1"><stop offset="0" stop-color="#016101"/><stop offset=".25" stop-color="#0a5a0a"/><stop offset=".5" stop-color="#1a441a"/><stop offset=".75" stop-color="#263426"/><stop offset="1" stop-color="#2e2e2e"/></linearGradient>
<linearGradient id="gtop" x1="0" y1="0" x2="1" y2="0"><stop offset="0" stop-color="#0eb40e"/><stop offset=".5" stop-color="#78ff78"/><stop offset="1" stop-color="#0eb40e"/></linearGradient>
<linearGradient id="gbot" x1="0" y1="0" x2="1" y2="0"><stop offset="0" stop-color="#188a18"/><stop offset=".5" stop-color="#86c286"/><stop offset="1" stop-color="#188a18"/></linearGradient>
<linearGradient id="glb" x1="0" y1="0" x2="0" y2="1"><stop offset="0" stop-color="#9a9a9a" stop-opacity="0"/><stop offset=".5" stop-color="#9a9a9a" stop-opacity=".35"/><stop offset="1" stop-color="#9a9a9a" stop-opacity="1"/></linearGradient><linearGradient id="gax" x1="0" y1="0" x2="0" y2="1"><stop offset="0" stop-color="#747474"/><stop offset="1" stop-color="#2c2c2c"/></linearGradient>
<linearGradient id="gmet" x1="0" y1="0" x2="1" y2="0"><stop offset="0" stop-color="#4a4a4a"/><stop offset=".3" stop-color="#88883a"/><stop offset=".62" stop-color="#f0f000"/><stop offset=".8" stop-color="#ff8800"/><stop offset="1" stop-color="#ff0000"/></linearGradient>
</defs><path d="M321 159.5H1826" stroke="#606060" stroke-width="1" stroke-dasharray="1 3"/><path d="M321 179.5H1826" stroke="#606060" stroke-width="1" stroke-dasharray="1 3"/><path d="M321 200.5H1826" stroke="#606060" stroke-width="1" stroke-dasharray="1 3"/><path d="M321 220.5H1826" stroke="#606060" stroke-width="1" stroke-dasharray="1 3"/><path d="M321 240.5H1826" stroke="#606060" stroke-width="1" stroke-dasharray="1 3"/><path d="M321 261.5H1826" stroke="#606060" stroke-width="1" stroke-dasharray="1 3"/><path d="M321 281.5H1826" stroke="#606060" stroke-width="1" stroke-dasharray="1 3"/><path d="M321 301.5H1826" stroke="#606060" stroke-width="1" stroke-dasharray="1 3"/><path d="M321 322.5H1826" stroke="#606060" stroke-width="1" stroke-dasharray="1 3"/><path d="M321 342.5H1826" stroke="#606060" stroke-width="1" stroke-dasharray="1 3"/><path d="M321 362.5H1826" stroke="#606060" stroke-width="1" stroke-dasharray="1 3"/><path d="M321 383.5H1826" stroke="#606060" stroke-width="1" stroke-dasharray="1 3"/><path d="M321 403.5H1826" stroke="#606060" stroke-width="1" stroke-dasharray="1 3"/><path d="M321 423.5H1826" stroke="#606060" stroke-width="1" stroke-dasharray="1 3"/><path d="M321 444.5H1826" stroke="#606060" stroke-width="1" stroke-dasharray="1 3"/><path d="M321 464.5H1826" stroke="#606060" stroke-width="1" stroke-dasharray="1 3"/><path d="M321 484.5H1826" stroke="#606060" stroke-width="1" stroke-dasharray="1 3"/><path d="M321 505.5H1826" stroke="#606060" stroke-width="1" stroke-dasharray="1 3"/><path d="M321 525.5H1826" stroke="#606060" stroke-width="1" stroke-dasharray="1 3"/><path d="M321 545.5H1826" stroke="#606060" stroke-width="1" stroke-dasharray="1 3"/><path d="M321 566.5H1826" stroke="#606060" stroke-width="1" stroke-dasharray="1 3"/><path d="M321 586.5H1826" stroke="#606060" stroke-width="1" stroke-dasharray="1 3"/><path d="M321 606.5H1826" stroke="#606060" stroke-width="1" stroke-dasharray="1 3"/><path d="M321 627.5H1826" stroke="#606060" stroke-width="1" stroke-dasharray="1 3"/><path d="M321 647.5H1826" stroke="#606060" stroke-width="1" stroke-dasharray="1 3"/><rect x="888" y="148" width="565" height="522" fill="url(#gfill)"/><path d="M889 159.5H1452" stroke="#7f957f" stroke-width="1" stroke-dasharray="1 3" opacity=".75"/><path d="M889 179.5H1452" stroke="#7f957f" stroke-width="1" stroke-dasharray="1 3" opacity=".75"/><path d="M889 200.5H1452" stroke="#7f957f" stroke-width="1" stroke-dasharray="1 3" opacity=".75"/><path d="M889 220.5H1452" stroke="#7f957f" stroke-width="1" stroke-dasharray="1 3" opacity=".75"/><path d="M889 240.5H1452" stroke="#7f957f" stroke-width="1" stroke-dasharray="1 3" opacity=".75"/><path d="M889 261.5H1452" stroke="#7f957f" stroke-width="1" stroke-dasharray="1 3" opacity=".75"/><path d="M889 281.5H1452" stroke="#7f957f" stroke-width="1" stroke-dasharray="1 3" opacity=".75"/><path d="M889 301.5H1452" stroke="#7f957f" stroke-width="1" stroke-dasharray="1 3" opacity=".75"/><path d="M889 322.5H1452" stroke="#7f957f" stroke-width="1" stroke-dasharray="1 3" opacity=".75"/><path d="M889 342.5H1452" stroke="#7f957f" stroke-width="1" stroke-dasharray="1 3" opacity=".75"/><path d="M889 362.5H1452" stroke="#7f957f" stroke-width="1" stroke-dasharray="1 3" opacity=".75"/><path d="M889 383.5H1452" stroke="#7f957f" stroke-width="1" stroke-dasharray="1 3" opacity=".75"/><path d="M889 403.5H1452" stroke="#7f957f" stroke-width="1" stroke-dasharray="1 3" opacity=".75"/><path d="M889 423.5H1452" stroke="#7f957f" stroke-width="1" stroke-dasharray="1 3" opacity=".75"/><path d="M889 444.5H1452" stroke="#7f957f" stroke-width="1" stroke-dasharray="1 3" opacity=".75"/><path d="M889 464.5H1452" stroke="#7f957f" stroke-width="1" stroke-dasharray="1 3" opacity=".75"/><path d="M889 484.5H1452" stroke="#7f957f" stroke-width="1" stroke-dasharray="1 3" opacity=".75"/><path d="M889 505.5H1452" stroke="#7f957f" stroke-width="1" stroke-dasharray="1 3" opacity=".75"/><path d="M889 525.5H1452" stroke="#7f957f" stroke-width="1" stroke-dasharray="1 3" opacity=".75"/><path d="M889 545.5H1452" stroke="#7f957f" stroke-width="1" stroke-dasharray="1 3" opacity=".75"/><path d="M889 566.5H1452" stroke="#7f957f" stroke-width="1" stroke-dasharray="1 3" opacity=".75"/><path d="M889 586.5H1452" stroke="#7f957f" stroke-width="1" stroke-dasharray="1 3" opacity=".75"/><path d="M889 606.5H1452" stroke="#7f957f" stroke-width="1" stroke-dasharray="1 3" opacity=".75"/><path d="M889 627.5H1452" stroke="#7f957f" stroke-width="1" stroke-dasharray="1 3" opacity=".75"/><path d="M889 647.5H1452" stroke="#7f957f" stroke-width="1" stroke-dasharray="1 3" opacity=".75"/><rect x="888" y="148" width="565" height="5.800" fill="url(#gtop)"/><rect x="888" y="665" width="565" height="5.500" fill="url(#gbot)"/><path d="M888 184h565" stroke="#2ba02b" stroke-width="2"/><path d="M888.500 148v522M1452.500 148v522" stroke="#43b843" stroke-width="1"/><path d="M1170.500 153v512" stroke="#58e058" stroke-width="1" stroke-dasharray="3 3"/><rect x="1162.700" y="157.200" width="15.700" height="15.600" rx="3" fill="#004a00"/><polyline points="268.0,583.8 269.4,583.3 270.8,596.8 272.2,585.7 273.6,594.1 275.0,592.7 276.4,594.9 277.8,589.1 279.2,586.8 280.6,590.4 282.0,590.6 283.4,581.4 284.8,594.7 286.2,586.7 287.6,573.5 289.0,544.5 290.0,498.0 290.4,526.0 291.8,562.0 293.2,584.4 294.6,581.4 296.0,572.4 297.0,558.0 297.4,566.6 298.8,577.6 300.2,569.4 301.0,556.0 301.6,567.4 303.0,572.4 304.0,559.0 304.4,567.0 305.8,577.2 307.2,583.8 308.6,587.2 310.0,580.1 311.4,579.0 312.8,580.9 314.2,585.6 315.6,577.8 317.0,580.5 318.4,590.3 319.8,582.3 321.2,575.9 322.6,569.0 323.0,563.0 324.0,572.9 325.4,578.9 326.8,576.0 328.2,579.1 329.6,583.7 331.0,577.0 332.4,587.7 333.8,577.2 335.2,584.4 336.6,575.5 338.0,574.1 339.4,563.4 340.0,552.0 340.8,565.3 342.2,575.2 343.6,580.5 345.0,578.0 346.4,575.9 347.8,583.1 349.2,576.8 350.6,572.5 352.0,582.0 353.4,584.5 354.8,573.8 356.2,583.7 357.6,575.9 359.0,578.5 360.4,585.2 361.8,573.9 363.2,571.8 364.6,568.0 366.0,542.0 367.0,500.0 367.4,525.3 368.8,557.9 370.2,576.2 371.6,573.7 373.0,575.3 374.4,583.2 375.8,581.7 377.2,582.4 378.6,577.9 380.0,586.7 381.4,575.5 382.8,582.6 384.2,575.6 385.6,579.3 387.0,567.0 388.4,546.7 389.0,525.0 389.8,550.4 391.2,569.4 392.6,579.6 394.0,579.0 395.4,581.2 396.8,580.9 398.2,575.5 399.6,583.0 401.0,581.6 402.4,575.7 403.8,581.8 405.2,577.5 406.6,579.2 408.0,586.7 409.4,579.0 410.8,582.5 412.2,577.4 413.6,583.6 415.0,584.2 416.4,573.8 417.8,576.5 419.2,581.6 420.6,578.0 422.0,579.2 423.4,585.6 424.8,575.2 426.2,581.6 427.6,584.1 429.0,573.7 430.4,571.4 431.8,578.9 433.2,574.7 434.6,580.1 436.0,571.4 437.4,577.6 438.8,569.4 440.2,576.5 441.6,574.4 443.0,569.9 444.4,578.3 445.8,573.4 447.2,566.7 448.6,565.6 450.0,574.0 451.4,573.7 452.8,573.7 454.2,571.6 455.6,565.3 457.0,568.6 458.4,561.7 459.8,563.4 461.2,565.5 462.6,552.1 464.0,523.1 465.0,477.0 465.4,504.7 466.8,539.9 468.2,558.6 469.6,568.9 471.0,557.0 472.4,556.0 473.8,567.5 475.2,557.4 476.6,561.1 478.0,563.7 479.4,555.2 480.8,563.6 482.2,554.6 483.6,551.7 485.0,559.2 486.4,564.1 487.8,546.9 489.2,549.2 490.6,557.7 492.0,555.7 493.4,544.7 494.8,560.4 496.2,545.6 497.6,553.7 499.0,546.2 500.4,553.7 501.8,552.8 503.2,550.2 504.6,542.8 506.0,548.0 507.4,553.9 508.8,547.8 510.2,540.0 511.6,552.0 513.0,537.8 514.4,551.2 515.8,537.3 517.2,542.7 518.6,541.3 520.0,528.3 521.4,541.7 522.8,532.7 524.2,538.2 525.6,536.6 527.0,544.4 528.4,527.6 529.8,527.1 531.2,536.8 532.6,540.5 534.0,522.6 535.4,530.8 536.8,537.0 538.2,521.6 539.6,516.1 541.0,495.5 542.0,463.0 542.4,482.5 543.8,507.2 545.2,523.2 546.6,516.3 548.0,528.9 549.4,519.6 550.8,516.6 552.2,513.4 553.6,523.1 555.0,518.0 556.4,516.7 557.8,520.3 559.2,518.3 560.6,513.8 562.0,504.6 563.0,490.0 563.4,498.8 564.8,510.0 566.2,513.6 567.6,520.6 569.0,514.4 570.4,520.9 571.8,510.1 573.2,525.6 574.6,510.8 576.0,517.9 577.4,512.6 578.8,511.4 580.2,511.1 581.6,525.0 583.0,520.3 584.4,507.6 585.8,512.9 587.2,517.8 588.6,510.4 590.0,505.0 591.4,521.4 592.8,515.7 594.2,511.3 595.6,509.9 597.0,521.6 598.4,517.0 599.8,519.4 601.2,520.9 602.6,510.2 604.0,517.9 605.4,511.5 606.8,520.8 608.2,515.7 609.6,504.2 611.0,513.7 612.4,507.3 613.8,509.7 615.2,507.3 616.6,502.7 618.0,484.4 619.0,455.0 619.4,472.7 620.8,495.4 622.2,510.2 623.6,505.4 625.0,518.0 626.4,503.5 627.8,514.3 629.2,511.2 630.6,510.8 632.0,505.2 633.4,510.1 634.8,517.9 636.2,498.2 637.6,517.6 639.0,505.5 640.4,497.1 641.8,513.0 643.2,505.4 644.6,508.3 646.0,517.7 647.4,498.7 648.8,514.3 650.2,509.5 651.6,504.4 653.0,515.2 654.4,502.7 655.8,504.9 657.2,511.4 658.6,497.3 660.0,506.8 661.4,503.7 662.8,503.2 664.2,514.2 665.6,507.8 667.0,501.2 668.4,496.7 669.8,485.3 670.0,480.0 671.2,494.1 672.6,501.3 674.0,502.7 675.4,497.2 676.8,506.2 678.2,507.9 679.6,508.2 681.0,505.9 682.4,494.0 683.8,506.9 685.2,497.2 686.6,504.8 688.0,503.0 689.4,496.1 690.8,502.3 692.2,501.2 693.6,489.3 695.0,463.1 696.0,421.0 696.4,446.3 697.8,478.8 699.2,500.1 700.6,498.6 702.0,502.3 703.4,493.8 704.8,496.4 706.2,507.7 707.6,491.2 709.0,503.3 710.4,490.4 711.8,496.4 713.2,502.6 714.6,501.6 716.0,491.8 717.4,499.9 718.8,502.1 720.2,493.5 721.6,499.1 723.0,492.0 724.4,494.6 725.8,498.5 727.2,494.6 728.6,504.4 730.0,499.5 731.4,493.1 732.8,503.4 734.2,488.2 735.6,499.1 737.0,504.8 738.4,487.1 739.8,496.8 741.2,487.5 742.6,497.5 744.0,502.0 745.4,486.4 746.8,501.6 748.2,488.4 749.6,487.8 751.0,501.0 752.4,490.4 753.8,498.9 755.2,487.5 756.6,493.6 758.0,487.2 759.4,476.9 760.0,466.0 760.8,478.7 762.2,488.1 763.6,493.0 765.0,486.6 766.4,496.7 767.8,489.5 769.2,492.6 770.6,481.0 772.0,455.3 773.0,414.0 773.4,438.9 774.8,470.9 776.2,484.9 777.6,485.1 779.0,498.5 780.4,482.0 781.8,495.0 783.2,481.6 784.6,493.6 786.0,495.7 787.4,485.5 788.8,499.3 790.2,484.4 791.6,485.5 793.0,493.8 794.4,483.8 795.8,494.3 797.2,488.1 798.6,484.5 800.0,479.2 801.4,497.5 802.8,480.7 804.2,490.9 805.6,484.3 807.0,496.6 808.4,484.2 809.8,493.2 811.2,485.7 812.6,490.7 814.0,483.5 815.4,484.5 816.8,492.5 818.2,482.5 819.6,490.2 821.0,484.2 822.4,490.9 823.8,486.3 825.2,496.1 826.6,480.2 828.0,497.3 829.4,493.3 830.8,484.0 832.2,495.5 833.6,481.3 835.0,494.9 836.4,485.5 837.8,486.4 839.2,491.2 840.6,485.1 842.0,493.7 843.4,480.6 844.8,498.5 846.2,482.5 847.6,478.4 849.0,456.8 850.0,422.0 850.4,443.0 851.8,469.8 853.2,477.1 854.6,461.8 855.0,450.0 856.0,469.3 857.4,465.6 858.0,452.0 858.8,467.8 860.2,469.8 861.0,456.0 861.6,467.7 863.0,478.4 864.4,484.6 865.8,482.1 867.2,492.9 868.6,491.8 870.0,473.3 871.4,484.0 872.8,479.9 874.2,477.5 875.6,479.3 877.0,478.9 878.4,491.1 879.8,474.4 881.2,482.1 882.6,476.9 884.0,483.7 885.4,484.3 886.8,487.9 888.2,484.0 889.6,475.0 891.0,473.4 892.4,483.2 893.8,467.0 895.2,483.7 896.6,468.8 898.0,465.9 899.4,482.4 900.8,466.7 902.2,484.5 903.6,461.5 905.0,458.5 906.4,474.8 907.8,467.3 909.2,477.1 910.6,475.7 912.0,477.7 913.4,473.7 914.8,462.8 916.2,473.2 917.6,463.9 919.0,475.9 920.4,451.9 921.8,475.2 923.2,455.0 924.6,465.6 926.0,461.2 927.4,459.4 928.8,472.5 930.2,469.0 931.6,455.2 933.0,463.7 934.4,457.1 935.8,468.7 937.2,453.5 938.6,464.3 940.0,466.0 941.4,447.3 942.8,452.8 944.2,447.1 945.6,444.4 947.0,460.7 948.4,444.4 949.8,454.0 951.2,439.2 952.6,456.0 954.0,460.0 955.4,444.7 956.8,450.8 958.2,460.3 959.6,458.2 961.0,438.5 962.4,462.3 963.8,441.9 965.2,446.4 966.6,448.4 968.0,430.6 969.4,454.9 970.8,446.6 972.2,448.2 973.6,443.7 975.0,439.6 976.4,427.4 977.8,426.0 979.2,416.0 980.6,441.2 982.0,416.4 983.4,434.1 984.8,436.2 986.2,437.8 987.6,421.9 989.0,432.0 990.4,436.1 991.8,408.3 993.2,423.2 994.6,416.1 996.0,427.8 997.4,421.7 998.8,409.0 1000.2,421.7 1001.6,408.1 1003.0,426.5 1004.4,402.6 1005.8,388.8 1007.2,418.0 1008.6,398.2 1010.0,389.7 1011.4,411.0 1012.8,411.5 1014.2,402.5 1015.6,383.1 1017.0,410.0 1018.4,382.5 1019.8,391.5 1021.2,392.0 1022.6,376.0 1024.0,384.3 1025.4,366.6 1026.8,364.9 1028.2,362.6 1029.6,349.2 1031.0,357.4 1032.4,350.4 1033.8,328.7 1035.2,333.7 1036.6,318.0 1038.0,310.9 1039.4,310.8 1040.8,301.5 1042.2,309.2 1043.6,308.5 1045.0,325.0 1046.4,344.6 1047.8,353.0 1049.2,365.9 1050.6,372.4 1052.0,367.2 1053.4,387.0 1054.8,374.9 1056.2,398.6 1057.6,379.6 1059.0,386.5 1060.4,394.5 1061.8,402.9 1063.2,394.1 1064.6,403.9 1066.0,394.5 1067.4,395.7 1068.8,403.9 1070.2,416.9 1071.6,397.0 1073.0,418.9 1074.4,400.4 1075.8,417.7 1077.2,425.8 1078.6,410.6 1080.0,404.9 1081.4,433.5 1082.8,441.1 1084.2,412.8 1085.6,438.3 1087.0,427.5 1088.4,444.1 1089.8,426.5 1091.2,443.9 1092.6,433.1 1094.0,449.9 1095.4,442.0 1096.8,454.2 1098.2,442.5 1099.6,442.8 1101.0,443.1 1102.4,459.7 1103.8,457.1 1105.2,464.8 1106.6,447.8 1108.0,462.3 1109.4,465.9 1110.8,453.6 1112.2,467.5 1113.6,468.7 1115.0,455.9 1116.4,460.0 1117.8,452.6 1119.2,471.3 1120.6,478.3 1122.0,475.7 1123.4,473.6 1124.8,468.8 1126.2,467.8 1127.6,460.5 1129.0,477.4 1130.4,479.5 1131.8,473.6 1133.2,484.9 1134.6,473.0 1136.0,485.1 1137.4,484.8 1138.8,468.3 1140.2,475.6 1141.6,487.4 1143.0,479.9 1144.4,491.6 1145.8,477.7 1147.2,479.7 1148.6,474.5 1150.0,496.2 1151.4,478.0 1152.8,475.5 1154.2,475.0 1155.6,477.7 1157.0,460.7 1158.0,433.0 1158.4,449.7 1159.8,471.3 1161.2,485.6 1162.6,481.5 1164.0,488.5 1165.4,477.0 1166.8,488.9 1168.2,484.3 1169.6,478.4 1171.0,482.1 1172.4,493.6 1173.8,495.2 1175.2,500.2 1176.6,477.5 1178.0,499.4 1179.4,483.0 1180.8,481.0 1182.2,488.1 1183.6,482.4 1185.0,494.1 1186.4,475.3 1187.8,492.7 1189.2,485.3 1190.6,493.0 1192.0,485.9 1193.4,490.8 1194.8,485.5 1196.2,483.9 1197.6,494.7 1199.0,485.3 1200.4,497.3 1201.8,483.2 1203.2,485.7 1204.6,485.8 1206.0,491.1 1207.4,478.1 1208.8,494.2 1210.2,483.6 1211.6,494.5 1213.0,482.2 1214.4,493.8 1215.8,481.3 1217.2,492.8 1218.6,485.9 1220.0,489.8 1221.4,487.3 1222.8,479.7 1224.0,465.0 1224.2,470.5 1225.6,480.3 1227.0,479.9 1228.0,468.0 1228.4,475.3 1229.8,484.7 1231.2,488.9 1232.6,484.8 1234.0,470.5 1235.0,447.0 1235.4,461.2 1236.8,479.6 1238.2,488.0 1239.6,497.5 1241.0,490.3 1242.4,490.8 1243.8,489.0 1245.2,499.9 1246.6,497.3 1248.0,486.9 1249.4,503.3 1250.8,486.5 1252.2,483.7 1253.6,482.1 1255.0,497.5 1256.4,483.6 1257.8,504.9 1259.2,488.6 1260.6,486.1 1262.0,501.0 1263.4,489.7 1264.8,502.9 1266.2,487.9 1267.6,504.3 1269.0,500.6 1270.4,490.1 1271.8,498.5 1273.2,498.2 1274.6,507.8 1276.0,499.3 1277.4,502.7 1278.8,485.2 1280.2,508.7 1281.6,493.5 1283.0,505.3 1284.4,504.5 1285.8,494.8 1287.2,502.8 1288.6,485.6 1290.0,506.7 1291.4,501.5 1292.8,494.6 1294.2,508.7 1295.6,493.2 1297.0,503.3 1298.4,493.4 1299.8,506.2 1301.2,494.0 1302.6,498.7 1304.0,504.4 1305.4,492.2 1306.8,500.2 1308.2,490.1 1309.6,489.9 1311.0,472.0 1312.0,443.0 1312.4,460.5 1313.8,483.1 1315.2,491.8 1316.6,492.3 1318.0,495.6 1319.4,500.0 1320.8,500.6 1322.2,487.0 1323.6,505.2 1325.0,503.6 1326.4,507.6 1327.8,489.4 1329.2,494.9 1330.6,506.6 1332.0,497.1 1333.4,495.2 1334.8,495.8 1336.2,488.3 1337.0,478.0 1337.6,486.8 1339.0,495.2 1340.4,500.4 1341.8,488.9 1343.2,509.0 1344.6,489.9 1346.0,508.3 1347.4,497.3 1348.8,506.1 1350.2,496.9 1351.6,505.4 1353.0,494.4 1354.4,506.4 1355.8,497.9 1357.2,508.6 1358.6,499.4 1360.0,497.2 1361.4,500.3 1362.8,510.5 1364.2,499.9 1365.6,498.7 1367.0,490.3 1368.4,511.0 1369.8,498.9 1371.2,490.9 1372.6,510.2 1374.0,492.7 1375.4,507.5 1376.8,508.1 1378.2,497.1 1379.6,508.7 1381.0,501.0 1382.4,504.3 1383.8,496.6 1385.2,499.1 1386.6,481.1 1388.0,442.0 1388.0,442.0 1389.4,481.3 1390.8,499.6 1392.2,496.6 1393.6,495.1 1395.0,514.9 1396.4,495.4 1397.8,506.5 1399.2,502.6 1400.6,497.9 1402.0,516.2 1403.4,512.9 1404.8,502.0 1406.2,511.5 1407.6,498.8 1409.0,510.8 1410.4,499.0 1411.8,496.7 1413.2,511.5 1414.6,509.6 1416.0,501.2 1417.4,508.6 1418.8,503.9 1420.2,509.8 1421.6,497.2 1423.0,511.5 1424.4,510.6 1425.8,502.2 1427.2,510.8 1428.6,499.7 1430.0,511.7 1431.4,500.4 1432.8,516.1 1434.2,499.3 1435.6,514.4 1437.0,512.8 1438.4,504.8 1439.8,499.6 1441.2,521.1 1442.6,505.9 1444.0,514.6 1445.4,502.5 1446.8,515.6 1448.2,514.5 1449.6,504.4 1451.0,516.7 1452.4,508.7 1453.8,514.0 1455.2,518.1 1456.6,518.1 1458.0,521.2 1459.4,515.3 1460.8,507.5 1462.2,507.5 1463.6,489.7 1465.0,451.0 1465.0,451.0 1466.4,489.9 1467.8,508.2 1469.2,517.1 1470.6,518.9 1472.0,510.5 1473.4,518.1 1474.8,512.2 1476.2,516.7 1477.6,512.9 1479.0,510.0 1480.4,522.5 1481.8,510.1 1483.2,518.1 1484.6,508.8 1486.0,515.8 1487.4,513.6 1488.8,518.6 1490.2,513.8 1491.6,510.3 1493.0,518.0 1494.4,506.5 1495.8,519.4 1497.2,519.9 1498.6,521.5 1500.0,519.8 1501.4,519.7 1502.8,512.4 1504.2,517.1 1505.6,517.4 1507.0,508.5 1508.4,521.5 1509.8,513.8 1511.2,514.2 1512.6,509.6 1514.0,514.2 1515.4,517.6 1516.8,511.2 1518.2,517.0 1519.6,513.6 1521.0,517.9 1522.4,510.6 1523.8,510.0 1525.2,501.0 1526.0,489.0 1526.6,499.2 1528.0,508.6 1529.4,514.2 1530.8,512.0 1532.2,516.1 1533.6,509.5 1535.0,519.4 1536.4,509.3 1537.8,505.0 1539.2,500.8 1540.0,490.0 1540.6,499.1 1542.0,507.6 1543.4,512.7 1544.8,506.7 1546.2,514.8 1547.6,510.1 1549.0,509.2 1550.4,518.9 1551.8,509.1 1553.2,515.6 1554.6,509.9 1556.0,516.7 1557.4,505.8 1558.8,515.5 1560.2,509.5 1561.6,503.3 1563.0,507.2 1564.4,513.0 1565.8,520.5 1567.2,516.0 1568.6,505.7 1570.0,519.3 1571.4,507.0 1572.8,510.5 1574.2,511.1 1575.6,519.1 1577.0,508.2 1578.4,508.7 1579.8,511.9 1581.2,520.7 1582.6,510.1 1584.0,524.3 1585.4,508.4 1586.8,519.3 1588.2,514.5 1589.6,520.6 1591.0,519.8 1592.4,512.5 1593.8,526.9 1595.2,512.9 1596.6,521.2 1598.0,515.9 1599.4,527.6 1600.8,518.1 1602.2,526.6 1603.6,521.6 1605.0,525.1 1606.4,531.0 1607.8,522.5 1609.2,519.7 1610.6,529.0 1612.0,523.7 1613.4,529.9 1614.8,522.8 1616.2,524.4 1617.6,501.9 1619.0,452.0 1619.0,452.0 1620.4,503.0 1621.8,527.6 1623.2,529.6 1624.6,542.1 1626.0,529.6 1627.4,534.9 1628.8,534.1 1630.2,535.5 1631.6,543.1 1633.0,540.6 1634.4,538.2 1635.8,545.8 1637.2,541.2 1638.6,552.0 1640.0,540.1 1641.4,547.6 1642.8,540.6 1644.2,526.5 1645.0,507.0 1645.6,523.9 1647.0,540.3 1648.4,550.8 1649.8,547.4 1651.2,547.6 1652.6,547.2 1654.0,550.9 1655.4,552.5 1656.8,560.4 1658.2,552.9 1659.6,552.5 1661.0,545.3 1662.0,533.0 1662.4,540.6 1663.8,550.7 1665.2,553.6 1666.6,564.8 1668.0,551.8 1669.4,562.3 1670.8,556.3 1672.2,562.1 1673.6,564.9 1675.0,557.3 1676.4,559.0 1677.8,562.2 1679.2,554.1 1680.6,541.3 1681.0,531.0 1682.0,548.2 1683.4,559.3 1684.8,559.8 1686.2,573.8 1687.6,561.4 1689.0,569.4 1690.4,570.8 1691.8,573.8 1693.2,560.7 1694.6,532.3 1696.0,470.0 1696.0,470.0 1697.4,532.9 1698.8,562.5 1700.2,568.5 1701.6,576.5 1703.0,568.1 1704.4,573.0 1705.8,573.1 1707.2,580.1 1708.6,566.9 1710.0,564.9 1711.4,553.9 1712.0,542.0 1712.8,556.1 1714.2,566.7 1715.6,572.6 1717.0,565.9 1718.4,567.9 1719.8,576.1 1721.2,564.9 1722.6,576.8 1724.0,567.6 1725.4,580.2 1726.8,570.4 1728.2,577.5 1729.6,566.7 1731.0,581.0 1732.4,571.5 1733.8,581.3 1735.2,572.0 1736.6,581.3 1738.0,568.0 1739.4,573.2 1740.8,577.3 1742.2,582.1 1743.6,578.6 1745.0,574.3 1746.4,576.9 1747.8,569.1 1749.2,570.3 1750.6,579.0 1752.0,572.1 1753.4,575.5 1754.8,570.7 1756.2,574.3 1757.6,585.0 1759.0,575.1 1760.4,574.0 1761.8,580.0 1763.2,579.4 1764.6,572.0 1766.0,575.3 1767.4,570.9 1768.8,576.6 1770.2,566.4 1771.6,547.4 1773.0,508.0 1773.0,508.0 1774.4,546.3 1775.8,562.8 1777.2,555.7 1778.6,540.7 1779.0,530.0 1780.0,546.8 1781.4,554.6 1782.8,553.1 1784.2,553.9 1785.6,541.5 1787.0,518.0 1787.0,518.0 1788.4,537.2 1789.8,534.1 1791.2,516.6 1792.6,518.2 1794.0,511.0 1795.4,500.7 1796.8,482.5 1798.2,470.0 1799.6,465.4 1801.0,484.0 1802.4,490.9 1803.8,480.4 1805.2,468.1 1806.6,480.7 1808.0,503.3 1809.4,510.1 1810.8,518.1 1812.2,521.0 1813.6,553.7 1815.0,550.1 1816.4,550.3 1817.8,539.8 1819.0,518.0 1819.2,526.4 1820.6,545.3 1822.0,557.1 1823.4,552.1 1824.8,540.1 1825.0,534.0 1826.2,551.1 1827.6,558.1 1829.0,543.6 1830.0,518.0 1830.4,534.0 1831.8,555.7 1833.2,571.1 1834.6,577.9 1836.0,589.2 1837.4,579.1 1838.8,592.6 1840.2,584.7 1841.6,583.5 1843.0,595.9 1844.4,584.1 1845.8,575.5 1847.2,586.8 1848.6,579.0 1850.0,562.0 1850.0,562.0 1851.4,579.2 1852.8,578.9 1854.2,592.0 1855.6,585.8 1857.0,603.5 1858.4,580.1 1859.8,596.5 1861.2,587.9 1862.6,596.3 1864.0,583.3 1865.4,587.8 1866.8,594.9 1868.2,587.5 1869.6,606.4 1871.0,583.4 1872.4,603.0 1873.8,587.2 1875.2,599.0 1876.6,582.0 1878.0,606.9 1879.4,603.3" fill="none" stroke="#ececec" stroke-width="1.150" stroke-linejoin="round" opacity=".92"/><clipPath id="gclip"><rect x="889" y="153" width="563" height="512"/></clipPath><g clip-path="url(#gclip)"><polyline points="268.0,583.8 269.4,583.3 270.8,596.8 272.2,585.7 273.6,594.1 275.0,592.7 276.4,594.9 277.8,589.1 279.2,586.8 280.6,590.4 282.0,590.6 283.4,581.4 284.8,594.7 286.2,586.7 287.6,573.5 289.0,544.5 290.0,498.0 290.4,526.0 291.8,562.0 293.2,584.4 294.6,581.4 296.0,572.4 297.0,558.0 297.4,566.6 298.8,577.6 300.2,569.4 301.0,556.0 301.6,567.4 303.0,572.4 304.0,559.0 304.4,567.0 305.8,577.2 307.2,583.8 308.6,587.2 310.0,580.1 311.4,579.0 312.8,580.9 314.2,585.6 315.6,577.8 317.0,580.5 318.4,590.3 319.8,582.3 321.2,575.9 322.6,569.0 323.0,563.0 324.0,572.9 325.4,578.9 326.8,576.0 328.2,579.1 329.6,583.7 331.0,577.0 332.4,587.7 333.8,577.2 335.2,584.4 336.6,575.5 338.0,574.1 339.4,563.4 340.0,552.0 340.8,565.3 342.2,575.2 343.6,580.5 345.0,578.0 346.4,575.9 347.8,583.1 349.2,576.8 350.6,572.5 352.0,582.0 353.4,584.5 354.8,573.8 356.2,583.7 357.6,575.9 359.0,578.5 360.4,585.2 361.8,573.9 363.2,571.8 364.6,568.0 366.0,542.0 367.0,500.0 367.4,525.3 368.8,557.9 370.2,576.2 371.6,573.7 373.0,575.3 374.4,583.2 375.8,581.7 377.2,582.4 378.6,577.9 380.0,586.7 381.4,575.5 382.8,582.6 384.2,575.6 385.6,579.3 387.0,567.0 388.4,546.7 389.0,525.0 389.8,550.4 391.2,569.4 392.6,579.6 394.0,579.0 395.4,581.2 396.8,580.9 398.2,575.5 399.6,583.0 401.0,581.6 402.4,575.7 403.8,581.8 405.2,577.5 406.6,579.2 408.0,586.7 409.4,579.0 410.8,582.5 412.2,577.4 413.6,583.6 415.0,584.2 416.4,573.8 417.8,576.5 419.2,581.6 420.6,578.0 422.0,579.2 423.4,585.6 424.8,575.2 426.2,581.6 427.6,584.1 429.0,573.7 430.4,571.4 431.8,578.9 433.2,574.7 434.6,580.1 436.0,571.4 437.4,577.6 438.8,569.4 440.2,576.5 441.6,574.4 443.0,569.9 444.4,578.3 445.8,573.4 447.2,566.7 448.6,565.6 450.0,574.0 451.4,573.7 452.8,573.7 454.2,571.6 455.6,565.3 457.0,568.6 458.4,561.7 459.8,563.4 461.2,565.5 462.6,552.1 464.0,523.1 465.0,477.0 465.4,504.7 466.8,539.9 468.2,558.6 469.6,568.9 471.0,557.0 472.4,556.0 473.8,567.5 475.2,557.4 476.6,561.1 478.0,563.7 479.4,555.2 480.8,563.6 482.2,554.6 483.6,551.7 485.0,559.2 486.4,564.1 487.8,546.9 489.2,549.2 490.6,557.7 492.0,555.7 493.4,544.7 494.8,560.4 496.2,545.6 497.6,553.7 499.0,546.2 500.4,553.7 501.8,552.8 503.2,550.2 504.6,542.8 506.0,548.0 507.4,553.9 508.8,547.8 510.2,540.0 511.6,552.0 513.0,537.8 514.4,551.2 515.8,537.3 517.2,542.7 518.6,541.3 520.0,528.3 521.4,541.7 522.8,532.7 524.2,538.2 525.6,536.6 527.0,544.4 528.4,527.6 529.8,527.1 531.2,536.8 532.6,540.5 534.0,522.6 535.4,530.8 536.8,537.0 538.2,521.6 539.6,516.1 541.0,495.5 542.0,463.0 542.4,482.5 543.8,507.2 545.2,523.2 546.6,516.3 548.0,528.9 549.4,519.6 550.8,516.6 552.2,513.4 553.6,523.1 555.0,518.0 556.4,516.7 557.8,520.3 559.2,518.3 560.6,513.8 562.0,504.6 563.0,490.0 563.4,498.8 564.8,510.0 566.2,513.6 567.6,520.6 569.0,514.4 570.4,520.9 571.8,510.1 573.2,525.6 574.6,510.8 576.0,517.9 577.4,512.6 578.8,511.4 580.2,511.1 581.6,525.0 583.0,520.3 584.4,507.6 585.8,512.9 587.2,517.8 588.6,510.4 590.0,505.0 591.4,521.4 592.8,515.7 594.2,511.3 595.6,509.9 597.0,521.6 598.4,517.0 599.8,519.4 601.2,520.9 602.6,510.2 604.0,517.9 605.4,511.5 606.8,520.8 608.2,515.7 609.6,504.2 611.0,513.7 612.4,507.3 613.8,509.7 615.2,507.3 616.6,502.7 618.0,484.4 619.0,455.0 619.4,472.7 620.8,495.4 622.2,510.2 623.6,505.4 625.0,518.0 626.4,503.5 627.8,514.3 629.2,511.2 630.6,510.8 632.0,505.2 633.4,510.1 634.8,517.9 636.2,498.2 637.6,517.6 639.0,505.5 640.4,497.1 641.8,513.0 643.2,505.4 644.6,508.3 646.0,517.7 647.4,498.7 648.8,514.3 650.2,509.5 651.6,504.4 653.0,515.2 654.4,502.7 655.8,504.9 657.2,511.4 658.6,497.3 660.0,506.8 661.4,503.7 662.8,503.2 664.2,514.2 665.6,507.8 667.0,501.2 668.4,496.7 669.8,485.3 670.0,480.0 671.2,494.1 672.6,501.3 674.0,502.7 675.4,497.2 676.8,506.2 678.2,507.9 679.6,508.2 681.0,505.9 682.4,494.0 683.8,506.9 685.2,497.2 686.6,504.8 688.0,503.0 689.4,496.1 690.8,502.3 692.2,501.2 693.6,489.3 695.0,463.1 696.0,421.0 696.4,446.3 697.8,478.8 699.2,500.1 700.6,498.6 702.0,502.3 703.4,493.8 704.8,496.4 706.2,507.7 707.6,491.2 709.0,503.3 710.4,490.4 711.8,496.4 713.2,502.6 714.6,501.6 716.0,491.8 717.4,499.9 718.8,502.1 720.2,493.5 721.6,499.1 723.0,492.0 724.4,494.6 725.8,498.5 727.2,494.6 728.6,504.4 730.0,499.5 731.4,493.1 732.8,503.4 734.2,488.2 735.6,499.1 737.0,504.8 738.4,487.1 739.8,496.8 741.2,487.5 742.6,497.5 744.0,502.0 745.4,486.4 746.8,501.6 748.2,488.4 749.6,487.8 751.0,501.0 752.4,490.4 753.8,498.9 755.2,487.5 756.6,493.6 758.0,487.2 759.4,476.9 760.0,466.0 760.8,478.7 762.2,488.1 763.6,493.0 765.0,486.6 766.4,496.7 767.8,489.5 769.2,492.6 770.6,481.0 772.0,455.3 773.0,414.0 773.4,438.9 774.8,470.9 776.2,484.9 777.6,485.1 779.0,498.5 780.4,482.0 781.8,495.0 783.2,481.6 784.6,493.6 786.0,495.7 787.4,485.5 788.8,499.3 790.2,484.4 791.6,485.5 793.0,493.8 794.4,483.8 795.8,494.3 797.2,488.1 798.6,484.5 800.0,479.2 801.4,497.5 802.8,480.7 804.2,490.9 805.6,484.3 807.0,496.6 808.4,484.2 809.8,493.2 811.2,485.7 812.6,490.7 814.0,483.5 815.4,484.5 816.8,492.5 818.2,482.5 819.6,490.2 821.0,484.2 822.4,490.9 823.8,486.3 825.2,496.1 826.6,480.2 828.0,497.3 829.4,493.3 830.8,484.0 832.2,495.5 833.6,481.3 835.0,494.9 836.4,485.5 837.8,486.4 839.2,491.2 840.6,485.1 842.0,493.7 843.4,480.6 844.8,498.5 846.2,482.5 847.6,478.4 849.0,456.8 850.0,422.0 850.4,443.0 851.8,469.8 853.2,477.1 854.6,461.8 855.0,450.0 856.0,469.3 857.4,465.6 858.0,452.0 858.8,467.8 860.2,469.8 861.0,456.0 861.6,467.7 863.0,478.4 864.4,484.6 865.8,482.1 867.2,492.9 868.6,491.8 870.0,473.3 871.4,484.0 872.8,479.9 874.2,477.5 875.6,479.3 877.0,478.9 878.4,491.1 879.8,474.4 881.2,482.1 882.6,476.9 884.0,483.7 885.4,484.3 886.8,487.9 888.2,484.0 889.6,475.0 891.0,473.4 892.4,483.2 893.8,467.0 895.2,483.7 896.6,468.8 898.0,465.9 899.4,482.4 900.8,466.7 902.2,484.5 903.6,461.5 905.0,458.5 906.4,474.8 907.8,467.3 909.2,477.1 910.6,475.7 912.0,477.7 913.4,473.7 914.8,462.8 916.2,473.2 917.6,463.9 919.0,475.9 920.4,451.9 921.8,475.2 923.2,455.0 924.6,465.6 926.0,461.2 927.4,459.4 928.8,472.5 930.2,469.0 931.6,455.2 933.0,463.7 934.4,457.1 935.8,468.7 937.2,453.5 938.6,464.3 940.0,466.0 941.4,447.3 942.8,452.8 944.2,447.1 945.6,444.4 947.0,460.7 948.4,444.4 949.8,454.0 951.2,439.2 952.6,456.0 954.0,460.0 955.4,444.7 956.8,450.8 958.2,460.3 959.6,458.2 961.0,438.5 962.4,462.3 963.8,441.9 965.2,446.4 966.6,448.4 968.0,430.6 969.4,454.9 970.8,446.6 972.2,448.2 973.6,443.7 975.0,439.6 976.4,427.4 977.8,426.0 979.2,416.0 980.6,441.2 982.0,416.4 983.4,434.1 984.8,436.2 986.2,437.8 987.6,421.9 989.0,432.0 990.4,436.1 991.8,408.3 993.2,423.2 994.6,416.1 996.0,427.8 997.4,421.7 998.8,409.0 1000.2,421.7 1001.6,408.1 1003.0,426.5 1004.4,402.6 1005.8,388.8 1007.2,418.0 1008.6,398.2 1010.0,389.7 1011.4,411.0 1012.8,411.5 1014.2,402.5 1015.6,383.1 1017.0,410.0 1018.4,382.5 1019.8,391.5 1021.2,392.0 1022.6,376.0 1024.0,384.3 1025.4,366.6 1026.8,364.9 1028.2,362.6 1029.6,349.2 1031.0,357.4 1032.4,350.4 1033.8,328.7 1035.2,333.7 1036.6,318.0 1038.0,310.9 1039.4,310.8 1040.8,301.5 1042.2,309.2 1043.6,308.5 1045.0,325.0 1046.4,344.6 1047.8,353.0 1049.2,365.9 1050.6,372.4 1052.0,367.2 1053.4,387.0 1054.8,374.9 1056.2,398.6 1057.6,379.6 1059.0,386.5 1060.4,394.5 1061.8,402.9 1063.2,394.1 1064.6,403.9 1066.0,394.5 1067.4,395.7 1068.8,403.9 1070.2,416.9 1071.6,397.0 1073.0,418.9 1074.4,400.4 1075.8,417.7 1077.2,425.8 1078.6,410.6 1080.0,404.9 1081.4,433.5 1082.8,441.1 1084.2,412.8 1085.6,438.3 1087.0,427.5 1088.4,444.1 1089.8,426.5 1091.2,443.9 1092.6,433.1 1094.0,449.9 1095.4,442.0 1096.8,454.2 1098.2,442.5 1099.6,442.8 1101.0,443.1 1102.4,459.7 1103.8,457.1 1105.2,464.8 1106.6,447.8 1108.0,462.3 1109.4,465.9 1110.8,453.6 1112.2,467.5 1113.6,468.7 1115.0,455.9 1116.4,460.0 1117.8,452.6 1119.2,471.3 1120.6,478.3 1122.0,475.7 1123.4,473.6 1124.8,468.8 1126.2,467.8 1127.6,460.5 1129.0,477.4 1130.4,479.5 1131.8,473.6 1133.2,484.9 1134.6,473.0 1136.0,485.1 1137.4,484.8 1138.8,468.3 1140.2,475.6 1141.6,487.4 1143.0,479.9 1144.4,491.6 1145.8,477.7 1147.2,479.7 1148.6,474.5 1150.0,496.2 1151.4,478.0 1152.8,475.5 1154.2,475.0 1155.6,477.7 1157.0,460.7 1158.0,433.0 1158.4,449.7 1159.8,471.3 1161.2,485.6 1162.6,481.5 1164.0,488.5 1165.4,477.0 1166.8,488.9 1168.2,484.3 1169.6,478.4 1171.0,482.1 1172.4,493.6 1173.8,495.2 1175.2,500.2 1176.6,477.5 1178.0,499.4 1179.4,483.0 1180.8,481.0 1182.2,488.1 1183.6,482.4 1185.0,494.1 1186.4,475.3 1187.8,492.7 1189.2,485.3 1190.6,493.0 1192.0,485.9 1193.4,490.8 1194.8,485.5 1196.2,483.9 1197.6,494.7 1199.0,485.3 1200.4,497.3 1201.8,483.2 1203.2,485.7 1204.6,485.8 1206.0,491.1 1207.4,478.1 1208.8,494.2 1210.2,483.6 1211.6,494.5 1213.0,482.2 1214.4,493.8 1215.8,481.3 1217.2,492.8 1218.6,485.9 1220.0,489.8 1221.4,487.3 1222.8,479.7 1224.0,465.0 1224.2,470.5 1225.6,480.3 1227.0,479.9 1228.0,468.0 1228.4,475.3 1229.8,484.7 1231.2,488.9 1232.6,484.8 1234.0,470.5 1235.0,447.0 1235.4,461.2 1236.8,479.6 1238.2,488.0 1239.6,497.5 1241.0,490.3 1242.4,490.8 1243.8,489.0 1245.2,499.9 1246.6,497.3 1248.0,486.9 1249.4,503.3 1250.8,486.5 1252.2,483.7 1253.6,482.1 1255.0,497.5 1256.4,483.6 1257.8,504.9 1259.2,488.6 1260.6,486.1 1262.0,501.0 1263.4,489.7 1264.8,502.9 1266.2,487.9 1267.6,504.3 1269.0,500.6 1270.4,490.1 1271.8,498.5 1273.2,498.2 1274.6,507.8 1276.0,499.3 1277.4,502.7 1278.8,485.2 1280.2,508.7 1281.6,493.5 1283.0,505.3 1284.4,504.5 1285.8,494.8 1287.2,502.8 1288.6,485.6 1290.0,506.7 1291.4,501.5 1292.8,494.6 1294.2,508.7 1295.6,493.2 1297.0,503.3 1298.4,493.4 1299.8,506.2 1301.2,494.0 1302.6,498.7 1304.0,504.4 1305.4,492.2 1306.8,500.2 1308.2,490.1 1309.6,489.9 1311.0,472.0 1312.0,443.0 1312.4,460.5 1313.8,483.1 1315.2,491.8 1316.6,492.3 1318.0,495.6 1319.4,500.0 1320.8,500.6 1322.2,487.0 1323.6,505.2 1325.0,503.6 1326.4,507.6 1327.8,489.4 1329.2,494.9 1330.6,506.6 1332.0,497.1 1333.4,495.2 1334.8,495.8 1336.2,488.3 1337.0,478.0 1337.6,486.8 1339.0,495.2 1340.4,500.4 1341.8,488.9 1343.2,509.0 1344.6,489.9 1346.0,508.3 1347.4,497.3 1348.8,506.1 1350.2,496.9 1351.6,505.4 1353.0,494.4 1354.4,506.4 1355.8,497.9 1357.2,508.6 1358.6,499.4 1360.0,497.2 1361.4,500.3 1362.8,510.5 1364.2,499.9 1365.6,498.7 1367.0,490.3 1368.4,511.0 1369.8,498.9 1371.2,490.9 1372.6,510.2 1374.0,492.7 1375.4,507.5 1376.8,508.1 1378.2,497.1 1379.6,508.7 1381.0,501.0 1382.4,504.3 1383.8,496.6 1385.2,499.1 1386.6,481.1 1388.0,442.0 1388.0,442.0 1389.4,481.3 1390.8,499.6 1392.2,496.6 1393.6,495.1 1395.0,514.9 1396.4,495.4 1397.8,506.5 1399.2,502.6 1400.6,497.9 1402.0,516.2 1403.4,512.9 1404.8,502.0 1406.2,511.5 1407.6,498.8 1409.0,510.8 1410.4,499.0 1411.8,496.7 1413.2,511.5 1414.6,509.6 1416.0,501.2 1417.4,508.6 1418.8,503.9 1420.2,509.8 1421.6,497.2 1423.0,511.5 1424.4,510.6 1425.8,502.2 1427.2,510.8 1428.6,499.7 1430.0,511.7 1431.4,500.4 1432.8,516.1 1434.2,499.3 1435.6,514.4 1437.0,512.8 1438.4,504.8 1439.8,499.6 1441.2,521.1 1442.6,505.9 1444.0,514.6 1445.4,502.5 1446.8,515.6 1448.2,514.5 1449.6,504.4 1451.0,516.7 1452.4,508.7 1453.8,514.0 1455.2,518.1 1456.6,518.1 1458.0,521.2 1459.4,515.3 1460.8,507.5 1462.2,507.5 1463.6,489.7 1465.0,451.0 1465.0,451.0 1466.4,489.9 1467.8,508.2 1469.2,517.1 1470.6,518.9 1472.0,510.5 1473.4,518.1 1474.8,512.2 1476.2,516.7 1477.6,512.9 1479.0,510.0 1480.4,522.5 1481.8,510.1 1483.2,518.1 1484.6,508.8 1486.0,515.8 1487.4,513.6 1488.8,518.6 1490.2,513.8 1491.6,510.3 1493.0,518.0 1494.4,506.5 1495.8,519.4 1497.2,519.9 1498.6,521.5 1500.0,519.8 1501.4,519.7 1502.8,512.4 1504.2,517.1 1505.6,517.4 1507.0,508.5 1508.4,521.5 1509.8,513.8 1511.2,514.2 1512.6,509.6 1514.0,514.2 1515.4,517.6 1516.8,511.2 1518.2,517.0 1519.6,513.6 1521.0,517.9 1522.4,510.6 1523.8,510.0 1525.2,501.0 1526.0,489.0 1526.6,499.2 1528.0,508.6 1529.4,514.2 1530.8,512.0 1532.2,516.1 1533.6,509.5 1535.0,519.4 1536.4,509.3 1537.8,505.0 1539.2,500.8 1540.0,490.0 1540.6,499.1 1542.0,507.6 1543.4,512.7 1544.8,506.7 1546.2,514.8 1547.6,510.1 1549.0,509.2 1550.4,518.9 1551.8,509.1 1553.2,515.6 1554.6,509.9 1556.0,516.7 1557.4,505.8 1558.8,515.5 1560.2,509.5 1561.6,503.3 1563.0,507.2 1564.4,513.0 1565.8,520.5 1567.2,516.0 1568.6,505.7 1570.0,519.3 1571.4,507.0 1572.8,510.5 1574.2,511.1 1575.6,519.1 1577.0,508.2 1578.4,508.7 1579.8,511.9 1581.2,520.7 1582.6,510.1 1584.0,524.3 1585.4,508.4 1586.8,519.3 1588.2,514.5 1589.6,520.6 1591.0,519.8 1592.4,512.5 1593.8,526.9 1595.2,512.9 1596.6,521.2 1598.0,515.9 1599.4,527.6 1600.8,518.1 1602.2,526.6 1603.6,521.6 1605.0,525.1 1606.4,531.0 1607.8,522.5 1609.2,519.7 1610.6,529.0 1612.0,523.7 1613.4,529.9 1614.8,522.8 1616.2,524.4 1617.6,501.9 1619.0,452.0 1619.0,452.0 1620.4,503.0 1621.8,527.6 1623.2,529.6 1624.6,542.1 1626.0,529.6 1627.4,534.9 1628.8,534.1 1630.2,535.5 1631.6,543.1 1633.0,540.6 1634.4,538.2 1635.8,545.8 1637.2,541.2 1638.6,552.0 1640.0,540.1 1641.4,547.6 1642.8,540.6 1644.2,526.5 1645.0,507.0 1645.6,523.9 1647.0,540.3 1648.4,550.8 1649.8,547.4 1651.2,547.6 1652.6,547.2 1654.0,550.9 1655.4,552.5 1656.8,560.4 1658.2,552.9 1659.6,552.5 1661.0,545.3 1662.0,533.0 1662.4,540.6 1663.8,550.7 1665.2,553.6 1666.6,564.8 1668.0,551.8 1669.4,562.3 1670.8,556.3 1672.2,562.1 1673.6,564.9 1675.0,557.3 1676.4,559.0 1677.8,562.2 1679.2,554.1 1680.6,541.3 1681.0,531.0 1682.0,548.2 1683.4,559.3 1684.8,559.8 1686.2,573.8 1687.6,561.4 1689.0,569.4 1690.4,570.8 1691.8,573.8 1693.2,560.7 1694.6,532.3 1696.0,470.0 1696.0,470.0 1697.4,532.9 1698.8,562.5 1700.2,568.5 1701.6,576.5 1703.0,568.1 1704.4,573.0 1705.8,573.1 1707.2,580.1 1708.6,566.9 1710.0,564.9 1711.4,553.9 1712.0,542.0 1712.8,556.1 1714.2,566.7 1715.6,572.6 1717.0,565.9 1718.4,567.9 1719.8,576.1 1721.2,564.9 1722.6,576.8 1724.0,567.6 1725.4,580.2 1726.8,570.4 1728.2,577.5 1729.6,566.7 1731.0,581.0 1732.4,571.5 1733.8,581.3 1735.2,572.0 1736.6,581.3 1738.0,568.0 1739.4,573.2 1740.8,577.3 1742.2,582.1 1743.6,578.6 1745.0,574.3 1746.4,576.9 1747.8,569.1 1749.2,570.3 1750.6,579.0 1752.0,572.1 1753.4,575.5 1754.8,570.7 1756.2,574.3 1757.6,585.0 1759.0,575.1 1760.4,574.0 1761.8,580.0 1763.2,579.4 1764.6,572.0 1766.0,575.3 1767.4,570.9 1768.8,576.6 1770.2,566.4 1771.6,547.4 1773.0,508.0 1773.0,508.0 1774.4,546.3 1775.8,562.8 1777.2,555.7 1778.6,540.7 1779.0,530.0 1780.0,546.8 1781.4,554.6 1782.8,553.1 1784.2,553.9 1785.6,541.5 1787.0,518.0 1787.0,518.0 1788.4,537.2 1789.8,534.1 1791.2,516.6 1792.6,518.2 1794.0,511.0 1795.4,500.7 1796.8,482.5 1798.2,470.0 1799.6,465.4 1801.0,484.0 1802.4,490.9 1803.8,480.4 1805.2,468.1 1806.6,480.7 1808.0,503.3 1809.4,510.1 1810.8,518.1 1812.2,521.0 1813.6,553.7 1815.0,550.1 1816.4,550.3 1817.8,539.8 1819.0,518.0 1819.2,526.4 1820.6,545.3 1822.0,557.1 1823.4,552.1 1824.8,540.1 1825.0,534.0 1826.2,551.1 1827.6,558.1 1829.0,543.6 1830.0,518.0 1830.4,534.0 1831.8,555.7 1833.2,571.1 1834.6,577.9 1836.0,589.2 1837.4,579.1 1838.8,592.6 1840.2,584.7 1841.6,583.5 1843.0,595.9 1844.4,584.1 1845.8,575.5 1847.2,586.8 1848.6,579.0 1850.0,562.0 1850.0,562.0 1851.4,579.2 1852.8,578.9 1854.2,592.0 1855.6,585.8 1857.0,603.5 1858.4,580.1 1859.8,596.5 1861.2,587.9 1862.6,596.3 1864.0,583.3 1865.4,587.8 1866.8,594.9 1868.2,587.5 1869.6,606.4 1871.0,583.4 1872.4,603.0 1873.8,587.2 1875.2,599.0 1876.6,582.0 1878.0,606.9 1879.4,603.3" fill="none" stroke="#a8d4a8" stroke-width="1.150" stroke-linejoin="round"/></g><rect x="330" y="150" width="285.500" height="26" fill="#020202"/><rect x="411" y="151.500" width="129" height="7" fill="url(#gmet)"/><circle cx="558.500" cy="155" r="3.300" fill="#f0e52a"/><path d="M411 164.500h200" stroke="#e03030" stroke-width="1"/><path d="M439.5 164v2.500" stroke="#e03030" stroke-width="1"/><path d="M468.5 164v2.500" stroke="#e03030" stroke-width="1"/><path d="M496.5 164v2.500" stroke="#e03030" stroke-width="1"/><path d="M525.5 164v2.500" stroke="#e03030" stroke-width="1"/><path d="M553.5 164v2.500" stroke="#e03030" stroke-width="1"/><path d="M582.5 164v2.500" stroke="#e03030" stroke-width="1"/><rect x="268" y="672" width="1612" height="11" fill="url(#gax)"/><rect x="268" y="683" width="1612" height="10" fill="#000"/><path d="M276.0 672.500v2.0M284.0 672.500v4.0M292.0 672.500v2.0M300.0 672.500v3.0M308.0 672.500v2.0M316.0 672.500v3.0M324.0 672.500v2.0M332.0 672.500v3.0M340.0 672.500v2.0M348.0 672.500v3.0M356.0 672.500v2.0M364.0 672.500v4.0M372.0 672.500v2.0M380.0 672.500v3.0M388.0 672.500v2.0M397.0 672.500v3.0M405.0 672.500v2.0M413.0 672.500v3.0M421.0 672.500v2.0M429.0 672.500v3.0M437.0 672.500v2.0M445.0 672.500v4.0M453.0 672.500v2.0M461.0 672.500v3.0M469.0 672.500v2.0M477.0 672.500v3.0M485.0 672.500v2.0M493.0 672.500v3.0M501.0 672.500v2.0M509.0 672.500v3.0M517.0 672.500v2.0M525.0 672.500v4.0M534.0 672.500v2.0M542.0 672.500v3.0M550.0 672.500v2.0M558.0 672.500v3.0M566.0 672.500v2.0M574.0 672.500v3.0M582.0 672.500v2.0M590.0 672.500v3.0M598.0 672.500v2.0M606.0 672.500v4.0M614.0 672.500v2.0M622.0 672.500v3.0M630.0 672.500v2.0M638.0 672.500v3.0M646.0 672.500v2.0M654.0 672.500v3.0M663.0 672.500v2.0M671.0 672.500v3.0M679.0 672.500v2.0M687.0 672.500v4.0M695.0 672.500v2.0M703.0 672.500v3.0M711.0 672.500v2.0M719.0 672.500v3.0M727.0 672.500v2.0M735.0 672.500v3.0M743.0 672.500v2.0M751.0 672.500v3.0M759.0 672.500v2.0M767.0 672.500v4.0M775.0 672.500v2.0M783.0 672.500v3.0M791.0 672.500v2.0M800.0 672.500v3.0M808.0 672.500v2.0M816.0 672.500v3.0M824.0 672.500v2.0M832.0 672.500v3.0M840.0 672.500v2.0M848.0 672.500v4.0M856.0 672.500v2.0M864.0 672.500v3.0M872.0 672.500v2.0M880.0 672.500v3.0M888.0 672.500v2.0M896.0 672.500v3.0M904.0 672.500v2.0M912.0 672.500v3.0M920.0 672.500v2.0M928.0 672.500v4.0M937.0 672.500v2.0M945.0 672.500v3.0M953.0 672.500v2.0M961.0 672.500v3.0M969.0 672.500v2.0M977.0 672.500v3.0M985.0 672.500v2.0M993.0 672.500v3.0M1001.0 672.500v2.0M1009.0 672.500v4.0M1017.0 672.500v2.0M1025.0 672.500v3.0M1033.0 672.500v2.0M1041.0 672.500v3.0M1049.0 672.500v2.0M1057.0 672.500v3.0M1066.0 672.500v2.0M1074.0 672.500v3.0M1082.0 672.500v2.0M1090.0 672.500v4.0M1098.0 672.500v2.0M1106.0 672.500v3.0M1114.0 672.500v2.0M1122.0 672.500v3.0M1130.0 672.500v2.0M1138.0 672.500v3.0M1146.0 672.500v2.0M1154.0 672.500v3.0M1162.0 672.500v2.0M1170.0 672.500v4.0M1178.0 672.500v2.0M1186.0 672.500v3.0M1194.0 672.500v2.0M1203.0 672.500v3.0M1211.0 672.500v2.0M1219.0 672.500v3.0M1227.0 672.500v2.0M1235.0 672.500v3.0M1243.0 672.500v2.0M1251.0 672.500v4.0M1259.0 672.500v2.0M1267.0 672.500v3.0M1275.0 672.500v2.0M1283.0 672.500v3.0M1291.0 672.500v2.0M1299.0 672.500v3.0M1307.0 672.500v2.0M1315.0 672.500v3.0M1323.0 672.500v2.0M1332.0 672.500v4.0M1340.0 672.500v2.0M1348.0 672.500v3.0M1356.0 672.500v2.0M1364.0 672.500v3.0M1372.0 672.500v2.0M1380.0 672.500v3.0M1388.0 672.500v2.0M1396.0 672.500v3.0M1404.0 672.500v2.0M1412.0 672.500v4.0M1420.0 672.500v2.0M1428.0 672.500v3.0M1436.0 672.500v2.0M1444.0 672.500v3.0M1452.0 672.500v2.0M1460.0 672.500v3.0M1469.0 672.500v2.0M1477.0 672.500v3.0M1485.0 672.500v2.0M1493.0 672.500v4.0M1501.0 672.500v2.0M1509.0 672.500v3.0M1517.0 672.500v2.0M1525.0 672.500v3.0M1533.0 672.500v2.0M1541.0 672.500v3.0M1549.0 672.500v2.0M1557.0 672.500v3.0M1565.0 672.500v2.0M1573.0 672.500v4.0M1581.0 672.500v2.0M1589.0 672.500v3.0M1597.0 672.500v2.0M1606.0 672.500v3.0M1614.0 672.500v2.0M1622.0 672.500v3.0M1630.0 672.500v2.0M1638.0 672.500v3.0M1646.0 672.500v2.0M1654.0 672.500v4.0M1662.0 672.500v2.0M1670.0 672.500v3.0M1678.0 672.500v2.0M1686.0 672.500v3.0M1694.0 672.500v2.0M1702.0 672.500v3.0M1710.0 672.500v2.0M1718.0 672.500v3.0M1726.0 672.500v2.0M1734.0 672.500v4.0M1743.0 672.500v2.0M1751.0 672.500v3.0M1759.0 672.500v2.0M1767.0 672.500v3.0M1775.0 672.500v2.0M1783.0 672.500v3.0M1791.0 672.500v2.0M1799.0 672.500v3.0M1807.0 672.500v2.0M1815.0 672.500v4.0M1823.0 672.500v2.0M1831.0 672.500v3.0M1839.0 672.500v2.0M1847.0 672.500v3.0M1855.0 672.500v2.0M1863.0 672.500v3.0M1872.0 672.500v2.0M1880.0 672.500v3.0" stroke="#a4a4a4" stroke-width="1.500"/><rect x="268" y="693" width="1612" height="6" fill="#f2f2f2"/><path d="M1043 695.500h63" stroke="#555" stroke-width="1.500" stroke-dasharray="1.500 2"/><path d="M1880.500 146v878" stroke="#9a9a9a" stroke-width="1.400"/><rect x="268" y="146" width="1" height="526" fill="url(#glb)"/></svg>
<div class="axl dl" style="left:272px;top:154.0px">-5 dBm</div>
<div class="axl dl" style="left:1780px;width:96px;text-align:right;top:154.0px">-5 dBm</div>
<div class="axl dl" style="left:272px;top:174.3px">-10 dBm</div>
<div class="axl dl" style="left:1780px;width:96px;text-align:right;top:174.3px">-10 dBm</div>
<div class="axl dl" style="left:272px;top:194.7px">-15 dBm</div>
<div class="axl dl" style="left:1780px;width:96px;text-align:right;top:194.7px">-15 dBm</div>
<div class="axl dl" style="left:272px;top:215.0px">-20 dBm</div>
<div class="axl dl" style="left:1780px;width:96px;text-align:right;top:215.0px">-20 dBm</div>
<div class="axl dl" style="left:272px;top:235.3px">-25 dBm</div>
<div class="axl dl" style="left:1780px;width:96px;text-align:right;top:235.3px">-25 dBm</div>
<div class="axl dl" style="left:272px;top:255.7px">-30 dBm</div>
<div class="axl dl" style="left:1780px;width:96px;text-align:right;top:255.7px">-30 dBm</div>
<div class="axl dl" style="left:272px;top:276.0px">-35 dBm</div>
<div class="axl dl" style="left:1780px;width:96px;text-align:right;top:276.0px">-35 dBm</div>
<div class="axl dl" style="left:272px;top:296.3px">-40 dBm</div>
<div class="axl dl" style="left:1780px;width:96px;text-align:right;top:296.3px">-40 dBm</div>
<div class="axl dl" style="left:272px;top:316.7px">-45 dBm</div>
<div class="axl dl" style="left:1780px;width:96px;text-align:right;top:316.7px">-45 dBm</div>
<div class="axl dl" style="left:272px;top:337.0px">-50 dBm</div>
<div class="axl dl" style="left:1780px;width:96px;text-align:right;top:337.0px">-50 dBm</div>
<div class="axl dl" style="left:272px;top:357.3px">-55 dBm</div>
<div class="axl dl" style="left:1780px;width:96px;text-align:right;top:357.3px">-55 dBm</div>
<div class="axl dl" style="left:272px;top:377.7px">-60 dBm</div>
<div class="axl dl" style="left:1780px;width:96px;text-align:right;top:377.7px">-60 dBm</div>
<div class="axl dl" style="left:272px;top:398.0px">-65 dBm</div>
<div class="axl dl" style="left:1780px;width:96px;text-align:right;top:398.0px">-65 dBm</div>
<div class="axl dl" style="left:272px;top:418.3px">-70 dBm</div>
<div class="axl dl" style="left:1780px;width:96px;text-align:right;top:418.3px">-70 dBm</div>
<div class="axl dl" style="left:272px;top:438.7px">-75 dBm</div>
<div class="axl dl" style="left:1780px;width:96px;text-align:right;top:438.7px">-75 dBm</div>
<div class="axl dl" style="left:272px;top:459.0px">-80 dBm</div>
<div class="axl dl" style="left:1780px;width:96px;text-align:right;top:459.0px">-80 dBm</div>
<div class="axl dl" style="left:272px;top:479.3px">-85 dBm</div>
<div class="axl dl" style="left:1780px;width:96px;text-align:right;top:479.3px">-85 dBm</div>
<div class="axl dl" style="left:272px;top:499.7px">-90 dBm</div>
<div class="axl dl" style="left:1780px;width:96px;text-align:right;top:499.7px">-90 dBm</div>
<div class="axl dl" style="left:272px;top:520.0px">-95 dBm</div>
<div class="axl dl" style="left:1780px;width:96px;text-align:right;top:520.0px">-95 dBm</div>
<div class="axl dl" style="left:272px;top:540.3px">-100 dBm</div>
<div class="axl dl" style="left:1780px;width:96px;text-align:right;top:540.3px">-100 dBm</div>
<div class="axl dl" style="left:272px;top:560.7px">-105 dBm</div>
<div class="axl dl" style="left:1780px;width:96px;text-align:right;top:560.7px">-105 dBm</div>
<div class="axl dl" style="left:272px;top:581.0px">-110 dBm</div>
<div class="axl dl" style="left:1780px;width:96px;text-align:right;top:581.0px">-110 dBm</div>
<div class="axl dl" style="left:272px;top:601.3px">-115 dBm</div>
<div class="axl dl" style="left:1780px;width:96px;text-align:right;top:601.3px">-115 dBm</div>
<div class="axl dl" style="left:272px;top:621.7px">-120 dBm</div>
<div class="axl dl" style="left:1780px;width:96px;text-align:right;top:621.7px">-120 dBm</div>
<div class="axl dl" style="left:272px;top:642.0px">-125 dBm</div>
<div class="axl dl" style="left:1780px;width:96px;text-align:right;top:642.0px">-125 dBm</div>
<div class="axl c fl" style="left:253.0px;width:60px;top:679.750px;">433.450</div>
<div class="axl c fl" style="left:333.6px;width:60px;top:679.750px;">433.500</div>
<div class="axl c fl" style="left:414.2px;width:60px;top:679.750px;">433.550</div>
<div class="axl c fl" style="left:494.8px;width:60px;top:679.750px;">433.600</div>
<div class="axl c fl" style="left:575.4px;width:60px;top:679.750px;">433.650</div>
<div class="axl c fl" style="left:656.0px;width:60px;top:679.750px;">433.700</div>
<div class="axl c fl" style="left:736.6px;width:60px;top:679.750px;">433.750</div>
<div class="axl c fl" style="left:817.2px;width:60px;top:679.750px;">433.800</div>
<div class="axl c fl" style="left:897.8px;width:60px;top:679.750px;">433.850</div>
<div class="axl c fl" style="left:978.4px;width:60px;top:679.750px;">433.900</div>
<div class="axl c fl" style="left:1059.0px;width:60px;top:679.750px;">433.950</div>
<div class="axl c fl" style="left:1139.6px;width:60px;top:679.750px;">434.000</div>
<div class="axl c fl" style="left:1220.2px;width:60px;top:679.750px;">434.050</div>
<div class="axl c fl" style="left:1300.8px;width:60px;top:679.750px;">434.100</div>
<div class="axl c fl" style="left:1381.4px;width:60px;top:679.750px;">434.150</div>
<div class="axl c fl" style="left:1462.0px;width:60px;top:679.750px;">434.200</div>
<div class="axl c fl" style="left:1542.6px;width:60px;top:679.750px;">434.250</div>
<div class="axl c fl" style="left:1623.2px;width:60px;top:679.750px;">434.300</div>
<div class="axl c fl" style="left:1703.8px;width:60px;top:679.750px;">434.350</div>
<div class="axl c fl" style="left:1784.4px;width:60px;top:679.750px;">434.400</div>
<div class="t mono" style="left:341px;top:154.500px;font-size:20px;line-height:20px;color:#fff">-36</div>
<div class="t mono" style="left:382px;top:160px;font-size:12px;line-height:14px;color:#fff">dBm</div>
<div class="t mono c" style="left:419.5px;width:40px;top:167.500px;font-size:8.500px;line-height:10px;color:#fff;font-weight:bold;letter-spacing:-.3px">-120</div>
<div class="t mono c" style="left:448.5px;width:40px;top:167.500px;font-size:8.500px;line-height:10px;color:#fff;font-weight:bold;letter-spacing:-.3px">-100</div>
<div class="t mono c" style="left:476.5px;width:40px;top:167.500px;font-size:8.500px;line-height:10px;color:#fff;font-weight:bold;letter-spacing:-.3px">-80</div>
<div class="t mono c" style="left:505.5px;width:40px;top:167.500px;font-size:8.500px;line-height:10px;color:#fff;font-weight:bold;letter-spacing:-.3px">-60</div>
<div class="t mono c" style="left:533.5px;width:40px;top:167.500px;font-size:8.500px;line-height:10px;color:#fff;font-weight:bold;letter-spacing:-.3px">-40</div>
<div class="t mono c" style="left:562.5px;width:40px;top:167.500px;font-size:8.500px;line-height:10px;color:#fff;font-weight:bold;letter-spacing:-.3px">-20</div>
<div class="t c" style="left:1162.500px;width:16px;top:159px;font-size:9px;line-height:13px;color:#fff">1</div>
<svg style="left:268px;top:699px" width="1613" height="325" viewBox="268 699 1613 325"><defs>
<linearGradient id="wl" gradientUnits="userSpaceOnUse" x1="268" y1="0" x2="1880" y2="0">
<stop offset="0" stop-color="#4a62c8" stop-opacity=".03"/><stop offset=".15" stop-color="#4a62c8" stop-opacity=".07"/><stop offset=".2" stop-color="#4a62c8" stop-opacity=".2"/><stop offset=".3" stop-color="#4a62c8" stop-opacity=".36"/><stop offset=".38" stop-color="#5a74d8" stop-opacity=".55"/><stop offset=".43" stop-color="#7a94ec" stop-opacity=".8"/><stop offset=".48" stop-color="#a8bcff" stop-opacity="1"/><stop offset=".516" stop-color="#7a94ec" stop-opacity=".85"/><stop offset=".58" stop-color="#5a74d8" stop-opacity=".6"/><stop offset=".74" stop-color="#4a62c8" stop-opacity=".48"/><stop offset=".84" stop-color="#4a62c8" stop-opacity=".25"/><stop offset=".9" stop-color="#4a62c8" stop-opacity=".08"/><stop offset="1" stop-color="#4a62c8" stop-opacity=".04"/></linearGradient>
<radialGradient id="wh"><stop offset="0" stop-color="#fff"/><stop offset=".3" stop-color="#e8eeff" stop-opacity=".95"/><stop offset=".6" stop-color="#9ab0ff" stop-opacity=".5"/><stop offset="1" stop-color="#5068c8" stop-opacity="0"/></radialGradient>
<linearGradient id="bax" x1="0" y1="0" x2="0" y2="1"><stop offset="0" stop-color="#4a4a4a"/><stop offset=".5" stop-color="#1c1c1c"/><stop offset=".52" stop-color="#000"/><stop offset="1" stop-color="#000"/></linearGradient>
<linearGradient id="bhl" x1="0" y1="0" x2="0" y2="1"><stop offset="0" stop-color="#6c6c6c"/><stop offset="1" stop-color="#2a2a2a"/></linearGradient>
<radialGradient id="yg"><stop offset="0" stop-color="#e6e000" stop-opacity=".95"/><stop offset=".5" stop-color="#b0aa00" stop-opacity=".7"/><stop offset="1" stop-color="#707000" stop-opacity="0"/></radialGradient>
<radialGradient id="wh2"><stop offset="0" stop-color="#dfe8ff" stop-opacity=".85"/><stop offset=".4" stop-color="#a8bcff" stop-opacity=".55"/><stop offset="1" stop-color="#5068c8" stop-opacity="0"/></radialGradient><pattern id="rip" width="3.400" height="18" patternUnits="userSpaceOnUse"><rect x="0" y="0" width="1.300" height="18" fill="#020221" opacity=".3"/></pattern><clipPath id="axc"><rect x="268" y="996" width="1612" height="27"/></clipPath>
</defs><rect x="268" y="699" width="1612" height="297" fill="#020221"/><rect x="268" y="700" width="1612" height="6" fill="url(#wl)" opacity=".55"/><rect x="268" y="708.500" width="1612" height="7" fill="url(#wl)" opacity=".9"/><rect x="268" y="706" width="1612" height="2.500" fill="url(#wl)" opacity=".25"/><rect x="268" y="715.500" width="1612" height="3" fill="url(#wl)" opacity=".3"/><path d="M800.5 717v3.2M956.5 717v3.4M1258.5 717v1.3M535.5 717v4.3M826.5 717v1.9M1694.5 717v2.9M1507.5 717v2.9M1274.5 717v1.6M1269.5 717v4.5M1137.5 717v4.0M1312.5 717v1.3M1414.5 717v3.4M875.5 717v1.1M1541.5 717v2.9M1368.5 717v4.5M1362.5 717v4.7M986.5 717v4.2M1044.5 717v4.7M1557.5 717v1.4M680.5 717v1.9M1659.5 717v2.7M1259.5 717v2.2M1118.5 717v2.5M934.5 717v3.3M1209.5 717v4.6M1324.5 717v4.7M1530.5 717v5.0M1312.5 717v1.7M1535.5 717v4.9M1587.5 717v3.3M1362.5 717v1.8M1501.5 717v3.3M856.5 717v1.3M1527.5 717v5.0M624.5 717v4.2M1004.5 717v1.6M866.5 717v4.1M1549.5 717v1.2M1245.5 717v1.2M1367.5 717v2.3M1559.5 717v4.9M1116.5 717v5.0M885.5 717v1.3M1227.5 717v1.1M752.5 717v2.6M1240.5 717v1.6M570.5 717v4.5M890.5 717v4.8M1578.5 717v2.5M1063.5 717v3.1M1279.5 717v3.4M1179.5 717v3.5M1629.5 717v3.0M1028.5 717v3.9M800.5 717v2.2M1673.5 717v3.1M1167.5 717v1.0M1009.5 717v3.3M543.5 717v3.5M1265.5 717v1.2M1260.5 717v2.9M1321.5 717v2.4M1354.5 717v4.0M546.5 717v1.2M1317.5 717v4.9M816.5 717v2.8M1219.5 717v2.3M949.5 717v2.3M955.5 717v3.4M874.5 717v2.5M1431.5 717v1.1M1191.5 717v3.9M885.5 717v1.9M1468.5 717v2.0M741.5 717v2.7M1343.5 717v1.4M899.5 717v2.3M1503.5 717v2.8M1529.5 717v1.7M917.5 717v3.6M1564.5 717v2.8M785.5 717v1.5M1144.5 717v1.8M1471.5 717v4.4M736.5 717v2.1M1472.5 717v3.6M1471.5 717v2.4M673.5 717v2.2M1456.5 717v2.1M928.5 717v2.7M1015.5 717v2.6M1606.5 717v1.6M525.5 717v4.8M1558.5 717v4.9M1032.5 717v4.8M1614.5 717v1.9M1399.5 717v4.3M1302.5 717v3.1M861.5 717v2.4M788.5 717v1.3M1214.5 717v2.1M1476.5 717v1.2M1586.5 717v3.8M1610.5 717v4.6M1581.5 717v3.3M535.5 717v4.0M722.5 717v2.2M1302.5 717v3.1M1008.5 717v4.8M1242.5 717v2.4M817.5 717v4.4M1083.5 717v4.1M935.5 717v1.8M1150.5 717v4.3M722.5 717v4.2M1607.5 717v4.2M1491.5 717v1.0M1261.5 717v4.5M578.5 717v2.1M836.5 717v3.1M1019.5 717v2.9M1436.5 717v1.0M584.5 717v1.5M667.5 717v1.3M1670.5 717v4.4M621.5 717v3.0M892.5 717v2.3M934.5 717v3.6M1212.5 717v2.4M745.5 717v2.3M666.5 717v3.2M1364.5 717v2.5M614.5 717v1.7M960.5 717v3.4M1443.5 717v2.5M1465.5 717v3.5M1029.5 717v2.5M1105.5 717v3.8M1016.5 717v3.8M1063.5 717v2.0M1152.5 717v3.8M604.5 717v2.7M1022.5 717v4.5M1625.5 717v2.5M1579.5 717v4.2M829.5 717v2.9M665.5 717v4.3M1301.5 717v4.5M1455.5 717v3.7M1385.5 717v3.3M641.5 717v3.4M525.5 717v1.6M1433.5 717v1.2M628.5 717v1.4M1558.5 717v1.7M547.5 717v4.4M663.5 717v4.4M1314.5 717v4.3M1643.5 717v3.3M1462.5 717v1.1M1425.5 717v3.0M1363.5 717v1.4M1403.5 717v4.7M592.5 717v2.3M1185.5 717v4.3M805.5 717v1.7M814.5 717v3.5M1409.5 717v2.6M953.5 717v2.6M933.5 717v2.7M618.5 717v3.0M1668.5 717v2.7M1401.5 717v1.6M1335.5 717v4.0M1315.5 717v3.1M1090.5 717v3.6M1578.5 717v1.6M633.5 717v4.0M1601.5 717v3.1M1042.5 717v3.9M739.5 717v2.1M755.5 717v3.3M891.5 717v1.9M1335.5 717v4.8M869.5 717v3.8M1007.5 717v4.4M1209.5 717v2.1M776.5 717v1.1M1085.5 717v2.5M723.5 717v2.4M900.5 717v4.1M689.5 717v5.0M1085.5 717v3.4M1072.5 717v4.3M1489.5 717v3.2M1087.5 717v3.9M1530.5 717v2.6M1385.5 717v4.8M1071.5 717v1.9M797.5 717v3.9M1316.5 717v4.8M1527.5 717v2.0M743.5 717v2.0M740.5 717v3.8M1533.5 717v4.6M820.5 717v4.5M889.5 717v2.7M1380.5 717v1.3M629.5 717v4.3M864.5 717v2.4M1204.5 717v3.7M528.5 717v2.3M1034.5 717v2.9M767.5 717v3.3M1647.5 717v2.6M1162.5 717v1.5M844.5 717v3.7M652.5 717v4.5M1592.5 717v1.4M1630.5 717v2.5M1431.5 717v4.0M868.5 717v3.7M1291.5 717v4.2M833.5 717v4.0M1654.5 717v3.7M1152.5 717v1.5M1102.5 717v2.4M1367.5 717v3.7M1188.5 717v1.7M1281.5 717v3.5M731.5 717v4.6M1293.5 717v1.5M1619.5 717v1.6M911.5 717v3.9M1224.5 717v3.2M1284.5 717v2.8M888.5 717v1.7M600.5 717v3.9M1410.5 717v3.2M1392.5 717v2.4M833.5 717v2.5M1549.5 717v1.2M1115.5 717v2.0M1427.5 717v2.4M912.5 717v2.6M1158.5 717v4.1M936.5 717v4.4M652.5 717v2.1M637.5 717v1.5M1439.5 717v3.9M738.5 717v1.8M1011.5 717v4.0M1482.5 717v4.0M1218.5 717v1.6M990.5 717v1.8M1142.5 717v3.3M758.5 717v2.0M1442.5 717v1.1M1467.5 717v4.6M1640.5 717v2.5M1172.5 717v3.3M1267.5 717v4.9M1330.5 717v2.2M1534.5 717v2.9M1229.5 717v3.9M522.5 717v4.1M1301.5 717v3.0M1137.5 717v2.8M748.5 717v3.1M563.5 717v3.0M1282.5 717v2.8M1187.5 717v4.8M1572.5 717v1.5M1455.5 717v3.5M579.5 717v2.4M795.5 717v1.3M1155.5 717v4.7M901.5 717v4.5M1339.5 717v1.5M1532.5 717v3.4M1613.5 717v3.9M1392.5 717v2.4M1471.5 717v4.7M1536.5 717v2.7M1413.5 717v2.9M648.5 717v1.2M611.5 717v1.8M709.5 717v3.0M1345.5 717v3.1M1018.5 717v3.6M879.5 717v2.9M1413.5 717v2.6M733.5 717v4.6M1369.5 717v2.5M957.5 717v3.1M1223.5 717v1.9M523.5 717v1.8M1444.5 717v1.6M1062.5 717v1.8M766.5 717v1.7M996.5 717v1.7M552.5 717v1.4M718.5 717v3.0M590.5 717v1.1M1048.5 717v2.6M1350.5 717v1.2M995.5 717v2.6M551.5 717v4.9M778.5 717v1.4M1080.5 717v1.7M1254.5 717v2.4M666.5 717v1.2M1378.5 717v2.1M1449.5 717v2.9M1620.5 717v2.2M814.5 717v2.1M1481.5 717v3.5M926.5 717v1.4M1325.5 717v4.9M1218.5 717v1.0M555.5 717v1.4M720.5 717v1.1M583.5 717v3.6M1582.5 717v1.8M1669.5 717v2.9M1468.5 717v4.7M1629.5 717v1.1M879.5 717v3.4M1636.5 717v1.4M866.5 717v4.4M655.5 717v2.6M914.5 717v3.7M1615.5 717v1.7M1392.5 717v3.9M1506.5 717v3.2M1609.5 717v2.5M1009.5 717v1.9M1439.5 717v2.9M837.5 717v1.7M1370.5 717v3.4M1358.5 717v2.5M1094.5 717v1.6M1358.5 717v1.1M1070.5 717v4.0M1319.5 717v1.4M799.5 717v4.4M1278.5 717v4.5M1549.5 717v2.8M1578.5 717v3.9M913.5 717v2.5M605.5 717v2.6M1647.5 717v1.4M1191.5 717v1.4M615.5 717v3.6M804.5 717v1.2M700.5 717v3.6M1210.5 717v1.0M791.5 717v4.9M779.5 717v3.2M1015.5 717v4.1M1233.5 717v4.2M1151.5 717v1.8M729.5 717v1.3M1494.5 717v1.5M548.5 717v4.9M755.5 717v4.6M621.5 717v2.9M782.5 717v4.3M1246.5 717v3.6M1418.5 717v4.5M928.5 717v3.4M1045.5 717v1.4M1505.5 717v3.4M1481.5 717v1.8M1156.5 717v2.9M1379.5 717v1.3M928.5 717v2.9M604.5 717v3.2M1387.5 717v2.7M1285.5 717v3.4M772.5 717v2.4M1694.5 717v2.3M1028.5 717v1.3M777.5 717v1.7M1618.5 717v3.9M1552.5 717v4.9M1242.5 717v4.7M1152.5 717v2.7M1638.5 717v4.6M1640.5 717v2.9M1432.5 717v2.6M1696.5 717v4.7M864.5 717v4.7M737.5 717v1.4M1372.5 717v2.2M1132.5 717v3.6M567.5 717v4.0M845.5 717v2.7M926.5 717v4.0M1401.5 717v2.1M641.5 717v2.2M1005.5 717v1.3M700.5 717v4.1M1346.5 717v4.9M1675.5 717v4.5M959.5 717v1.6M888.5 717v2.9M1140.5 717v3.2M944.5 717v4.4M856.5 717v2.9M1566.5 717v4.2M870.5 717v2.0M1471.5 717v1.0M675.5 717v3.1M1152.5 717v1.7M579.5 717v1.8M1428.5 717v2.9M1675.5 717v4.1M1675.5 717v1.1M738.5 717v1.1" stroke="#6a84e0" stroke-width="1" opacity=".45"/><ellipse cx="1035" cy="703.500" rx="95" ry="4.500" fill="url(#wh2)"/><ellipse cx="1035" cy="712" rx="120" ry="6" fill="url(#wh2)"/><ellipse cx="1041" cy="703.500" rx="22" ry="4.500" fill="url(#wh)"/><ellipse cx="1041" cy="712" rx="30" ry="6.500" fill="url(#wh)"/><ellipse cx="1041" cy="708.500" rx="11" ry="11" fill="url(#wh)"/><rect x="1035" y="700" width="12" height="17" fill="#fff" opacity=".75"/><ellipse cx="860" cy="712" rx="14" ry="4" fill="url(#wh)" opacity=".5"/><ellipse cx="1225" cy="713" rx="12" ry="3.500" fill="url(#wh)" opacity=".55"/><ellipse cx="1800" cy="712" rx="9" ry="3" fill="url(#wh)" opacity=".6"/><ellipse cx="1800" cy="703" rx="6" ry="2" fill="url(#wh)" opacity=".4"/><rect x="520" y="700" width="1200" height="18" fill="url(#rip)"/><path d="M268 702.500h1612M268 705.500h1612M268 707.500h1612M268 710.500h1612M268 714.500h1612" stroke="#020221" stroke-width="1" opacity=".28"/><path d="M290.5 700v4.500M290.5 709.500v8" stroke="#a0b4ff" stroke-width="1.200" opacity="0.60"/><path d="M367.5 700v4.500M367.5 709.500v8" stroke="#a0b4ff" stroke-width="1.200" opacity="0.60"/><path d="M389.5 700v4.500M389.5 709.500v8" stroke="#a0b4ff" stroke-width="1.200" opacity="0.50"/><path d="M465.5 700v4.500M465.5 709.500v8" stroke="#a0b4ff" stroke-width="1.200" opacity="0.70"/><path d="M542.5 700v4.500M542.5 709.500v8" stroke="#a0b4ff" stroke-width="1.200" opacity="0.65"/><path d="M619.5 700v296" stroke="#7088e8" stroke-width="1" opacity="0.08"/><path d="M619.5 700v4.500M619.5 709.500v8" stroke="#a0b4ff" stroke-width="1.200" opacity="0.38"/><path d="M696.5 700v296" stroke="#7088e8" stroke-width="1" opacity="0.20"/><path d="M696.5 700v4.500M696.5 709.500v8" stroke="#a0b4ff" stroke-width="1.200" opacity="0.50"/><path d="M773.5 700v296" stroke="#7088e8" stroke-width="1" opacity="0.42"/><path d="M773.5 700v4.500M773.5 709.500v8" stroke="#a0b4ff" stroke-width="1.200" opacity="0.72"/><path d="M850.5 700v296" stroke="#7088e8" stroke-width="1" opacity="0.28"/><path d="M850.5 700v4.500M850.5 709.500v8" stroke="#a0b4ff" stroke-width="1.200" opacity="0.58"/><path d="M1004.5 700v296" stroke="#7088e8" stroke-width="1" opacity="0.22"/><path d="M1004.5 700v4.500M1004.5 709.500v8" stroke="#a0b4ff" stroke-width="1.200" opacity="0.52"/><path d="M1081.5 700v296" stroke="#7088e8" stroke-width="1" opacity="0.26"/><path d="M1081.5 700v4.500M1081.5 709.500v8" stroke="#a0b4ff" stroke-width="1.200" opacity="0.56"/><path d="M1158.5 700v296" stroke="#7088e8" stroke-width="1" opacity="0.22"/><path d="M1158.5 700v4.500M1158.5 709.500v8" stroke="#a0b4ff" stroke-width="1.200" opacity="0.52"/><path d="M1235.5 700v296" stroke="#7088e8" stroke-width="1" opacity="0.22"/><path d="M1235.5 700v4.500M1235.5 709.500v8" stroke="#a0b4ff" stroke-width="1.200" opacity="0.52"/><path d="M1312.5 700v296" stroke="#7088e8" stroke-width="1" opacity="0.22"/><path d="M1312.5 700v4.500M1312.5 709.500v8" stroke="#a0b4ff" stroke-width="1.200" opacity="0.52"/><path d="M1388.5 700v296" stroke="#7088e8" stroke-width="1" opacity="0.20"/><path d="M1388.5 700v4.500M1388.5 709.500v8" stroke="#a0b4ff" stroke-width="1.200" opacity="0.50"/><path d="M1465.5 700v296" stroke="#7088e8" stroke-width="1" opacity="0.28"/><path d="M1465.5 700v4.500M1465.5 709.500v8" stroke="#a0b4ff" stroke-width="1.200" opacity="0.58"/><path d="M1619.5 700v296" stroke="#7088e8" stroke-width="1" opacity="0.10"/><path d="M1619.5 700v4.500M1619.5 709.500v8" stroke="#a0b4ff" stroke-width="1.200" opacity="0.40"/><path d="M1696.5 700v4.500M1696.5 709.500v8" stroke="#a0b4ff" stroke-width="1.200" opacity="0.80"/><path d="M1773.5 700v4.500M1773.5 709.500v8" stroke="#a0b4ff" stroke-width="1.200" opacity="0.60"/><path d="M888.5 700v296" stroke="#48c848" stroke-width="1" stroke-dasharray="3 3" opacity=".9"/><path d="M1170.5 700v296" stroke="#48c848" stroke-width="1" stroke-dasharray="3 3" opacity=".9"/><path d="M1452.5 700v296" stroke="#48c848" stroke-width="1" stroke-dasharray="3 3" opacity=".9"/><rect x="278" y="757" width="367" height="228.500" rx="5" fill="#01010c" opacity=".93"/><rect x="978.500" y="927.500" width="191" height="58" rx="5" fill="#01010c" opacity=".93"/><rect x="268" y="996" width="1612" height="27" fill="url(#bax)"/><rect x="881" y="996" width="294.500" height="27" fill="url(#bhl)" opacity=".8"/><g clip-path="url(#axc)"><ellipse cx="1028" cy="1024" rx="125" ry="11" fill="url(#yg)"/></g><path d="M268 996.500h1612" stroke="#8c8c8c" stroke-width="1"/><path d="M297.5 997v3M312.5 997v6M326.5 997v3M341.5 997v3M356.5 997v3M370.5 997v3M385.5 997v3M400.5 997v3M414.5 997v3M429.5 997v3M444.5 997v3M458.5 997v6M473.5 997v3M488.5 997v3M502.5 997v3M517.5 997v3M532.5 997v3M546.5 997v3M561.5 997v3M576.5 997v3M590.5 997v3M605.5 997v6M620.5 997v3M634.5 997v3M649.5 997v3M664.5 997v3M678.5 997v3M693.5 997v3M708.5 997v3M722.5 997v3M737.5 997v3M752.5 997v6M767.5 997v3M781.5 997v3M796.5 997v3M811.5 997v3M825.5 997v3M840.5 997v3M855.5 997v3M869.5 997v3M884.5 997v3M899.5 997v6M913.5 997v3M928.5 997v3M943.5 997v3M957.5 997v3M972.5 997v3M987.5 997v3M1001.5 997v3M1016.5 997v3M1031.5 997v3M1045.5 997v6M1060.5 997v3M1075.5 997v3M1089.5 997v3M1104.5 997v3M1119.5 997v3M1133.5 997v3M1148.5 997v3M1163.5 997v3M1177.5 997v3M1192.5 997v6M1207.5 997v3M1221.5 997v3M1236.5 997v3M1251.5 997v3M1265.5 997v3M1280.5 997v3M1295.5 997v3M1309.5 997v3M1324.5 997v3M1339.5 997v6M1353.5 997v3M1368.5 997v3M1383.5 997v3M1397.5 997v3M1412.5 997v3M1427.5 997v3M1441.5 997v3M1456.5 997v3M1471.5 997v3M1485.5 997v6M1500.5 997v3M1515.5 997v3M1529.5 997v3M1544.5 997v3M1559.5 997v3M1573.5 997v3M1588.5 997v3M1603.5 997v3M1617.5 997v3M1632.5 997v6M1647.5 997v3M1662.5 997v3M1676.5 997v3M1691.5 997v3M1706.5 997v3M1720.5 997v3M1735.5 997v3M1750.5 997v3" stroke="#9c9c9c" stroke-width="1.700"/><path d="M881.500 996v27M1175 996v27" stroke="#d0d0d0" stroke-width="1.600"/><path d="M1028.500 996v27" stroke="#f0e800" stroke-width="1.300"/><rect x="1762" y="997" width="118" height="26" fill="#f0f0f0"/><rect x="268" y="997" width="27" height="26" fill="#f0f0f0"/><rect x="270.5" y="998.500" width="23.5" height="23" fill="#e1e1e1" stroke="#adadad" stroke-width="1"/><rect x="1763.5" y="998.500" width="35.5" height="23" fill="#e1e1e1" stroke="#adadad" stroke-width="1"/><rect x="1802.5" y="998.500" width="48.5" height="23" fill="#e1e1e1" stroke="#adadad" stroke-width="1"/><rect x="1855.0" y="998.500" width="22.5" height="23" fill="#e1e1e1" stroke="#adadad" stroke-width="1"/><circle cx="282" cy="1010" r="7" fill="#fafafa" stroke="#333" stroke-width="1.400"/><path d="M282 1007l-3.800 3 3.800 3zM286 1007l-3.800 3 3.800 3z" fill="#222"/><circle cx="1866" cy="1010" r="7" fill="#fafafa" stroke="#333" stroke-width="1.400"/><path d="M1862.500 1007l3.800 3-3.800 3zM1866.300 1007l3.800 3-3.800 3z" fill="#222"/><path d="M1781 1007q.5-2 2.500-2.500t2.500-1.800" stroke="#555" fill="none"/><rect x="1773.500" y="1007.500" width="15" height="8" fill="#f4f4f4" stroke="#444"/><path d="M1775 1009.500h12M1775 1011.500h12" stroke="#555" stroke-dasharray="1.200 .8"/><path d="M1776.500 1013.500h9" stroke="#555"/><path d="M1840 1006.500l4 3.500-4 3.500z" fill="#111"/></svg>
<div class="t mono" style="left:424px;top:764.500px;font-size:13.700px;line-height:16px;color:#fff;white-space:pre">434.0   –</div>
<div class="t mono" style="left:987px;top:938px;font-size:13.700px;line-height:16px;color:#fff;white-space:pre">Freq: 433.940.075 MHz</div>
<div class="t mono" style="left:987px;top:961px;font-size:13.700px;line-height:16px;color:#fff;white-space:pre">Span:        ±500 kHz</div>
<div class="a" style="left:294.500px;top:1004px;width:1468px;height:19px;overflow:hidden"><div class="t c" style="left:-12.3px;width:60px;top:2.500px;font-size:12.500px;line-height:15px;color:#dcdcdc">431.500</div><div class="t c" style="left:134.4px;width:60px;top:2.500px;font-size:12.500px;line-height:15px;color:#dcdcdc">432.000</div><div class="t c" style="left:281.1px;width:60px;top:2.500px;font-size:12.500px;line-height:15px;color:#dcdcdc">432.500</div><div class="t c" style="left:427.8px;width:60px;top:2.500px;font-size:12.500px;line-height:15px;color:#dcdcdc">433.000</div><div class="t c" style="left:574.6px;width:60px;top:2.500px;font-size:12.500px;line-height:15px;color:#dcdcdc">433.500</div><div class="t c" style="left:721.3px;width:60px;top:2.500px;font-size:12.500px;line-height:15px;color:#dcdcdc">434.000</div><div class="t c" style="left:868.0px;width:60px;top:2.500px;font-size:12.500px;line-height:15px;color:#dcdcdc">434.500</div><div class="t c" style="left:1014.7px;width:60px;top:2.500px;font-size:12.500px;line-height:15px;color:#dcdcdc">435.000</div><div class="t c" style="left:1161.4px;width:60px;top:2.500px;font-size:12.500px;line-height:15px;color:#dcdcdc">435.500</div><div class="t c" style="left:1308.2px;width:60px;top:2.500px;font-size:12.500px;line-height:15px;color:#dcdcdc">436.000</div></div>
<div class="t" style="left:1811px;top:1003px;font-size:11.500px">x5</div>
<div class="a" style="left:1881px;top:146px;width:38px;height:30px;background:linear-gradient(#525252,#2c2c2c 50%,#000 52%,#000);border-bottom:1px solid #3c3c3c;border-top:1px solid #b0b0b0"></div>
<div class="t c" style="left:1881px;width:38px;top:154.500px;font-size:11.500px;color:#fff">Auto</div>
<div class="a" style="left:1883px;top:323px;width:34px;height:361px;background:linear-gradient(#ffff00 0,#ffff40 3%,#ffffc0 7%,#ffffff 10%,#ffffff 27%,#e4e8ff 35%,#b0bcf4 46%,#6880e0 60%,#3a4cb0 72%,#1c2668 84%,#0a0e38 93%,#020218 100%)"></div>
<div class="a" style="left:1883px;top:683px;width:34px;height:1.500px;background:#fff"></div>
<div class="a" style="left:1919px;top:146px;width:1px;height:878px;background:#e8e8e8"></div>
<div class="t c" style="left:1883px;width:34px;top:223px;font-size:9px;line-height:11px;color:#c4c4c4">-10</div>
<div class="t c" style="left:1883px;width:34px;top:276px;font-size:9px;line-height:11px;color:#c4c4c4">-20</div>
<div class="a" style="left:1886px;top:325px;width:28px;height:17px;border-radius:4px;background:rgba(0,0,0,.45)"></div>
<div class="t c" style="left:1883px;width:34px;top:329px;font-size:9px;line-height:11px;color:#c4c4c4">-30</div>
<div class="a" style="left:1886px;top:378px;width:28px;height:17px;border-radius:4px;background:rgba(0,0,0,.45)"></div>
<div class="t c" style="left:1883px;width:34px;top:382px;font-size:9px;line-height:11px;color:#c4c4c4">-40</div>
<div class="a" style="left:1886px;top:431px;width:28px;height:17px;border-radius:4px;background:rgba(0,0,0,.45)"></div>
<div class="t c" style="left:1883px;width:34px;top:435px;font-size:9px;line-height:11px;color:#c4c4c4">-50</div>
<div class="a" style="left:1886px;top:484px;width:28px;height:17px;border-radius:4px;background:rgba(0,0,0,.45)"></div>
<div class="t c" style="left:1883px;width:34px;top:488px;font-size:9px;line-height:11px;color:#c4c4c4">-60</div>
<div class="a" style="left:1886px;top:537px;width:28px;height:17px;border-radius:4px;background:rgba(0,0,0,.45)"></div>
<div class="t c" style="left:1883px;width:34px;top:541px;font-size:9px;line-height:11px;color:#c4c4c4">-70</div>
<div class="a" style="left:1886px;top:590px;width:28px;height:17px;border-radius:4px;background:rgba(0,0,0,.45)"></div>
<div class="t c" style="left:1883px;width:34px;top:594px;font-size:9px;line-height:11px;color:#c4c4c4">-80</div>
<div class="a" style="left:1886px;top:643px;width:28px;height:17px;border-radius:4px;background:rgba(0,0,0,.45)"></div>
<div class="t c" style="left:1883px;width:34px;top:647px;font-size:9px;line-height:11px;color:#c4c4c4">-90</div>
<div class="t c" style="left:1883px;width:34px;top:700px;font-size:9px;line-height:11px;color:#c4c4c4">-100</div>
<div class="t c" style="left:1883px;width:34px;top:753px;font-size:9px;line-height:11px;color:#c4c4c4">-110</div>
<div class="t c" style="left:1883px;width:34px;top:806px;font-size:9px;line-height:11px;color:#c4c4c4">-120</div>
<div class="t c" style="left:1883px;width:34px;top:859px;font-size:9px;line-height:11px;color:#c4c4c4">-130</div>
<div class="t c" style="left:1883px;width:34px;top:912px;font-size:9px;line-height:11px;color:#c4c4c4">-140</div>
<div class="t c" style="left:1883px;width:34px;top:965px;font-size:9px;line-height:11px;color:#c4c4c4">-150</div>
<div class="a" style="left:0;top:1023px;width:1920px;height:25px;background:#f0f0f0;border-top:1px solid #fcfcfc"></div>
<div class="t" style="left:9px;top:1029px;font-size:11.500px;letter-spacing:-.46px;color:#6d6d6d">SDRPlay RSP1, BW = 1.000 MHz</div>
<div class="t" style="left:1448px;top:1029px;font-size:11.500px;letter-spacing:-.6px">CPU: 4.4%</div>
<div class="t" style="left:1597px;top:1029px;font-size:11.500px;letter-spacing:-.15px">Audio: 32ms</div>
<div class="t" style="left:1758px;top:1029px;font-size:11.500px;letter-spacing:-.4px">Size: 508.3 MB</div>
<div class="a" style="left:1513.5px;top:1031px;width:70px;height:12px;background:#e6e6e6;border:1px solid #bcbcbc"></div>
<div class="a" style="left:1674.5px;top:1031px;width:70px;height:12px;background:#e6e6e6;border:1px solid #bcbcbc"></div>
<div class="a" style="left:1845.0px;top:1031px;width:70px;height:12px;background:#e6e6e6;border:1px solid #bcbcbc"></div>
<div class="a" style="left:1677px;top:1033.700px;width:38px;height:6.600px;background:#06b025"></div>
<div class="a" style="left:1846.500px;top:1033.700px;width:2px;height:6.600px;background:#06b025"></div>
</body></html>
